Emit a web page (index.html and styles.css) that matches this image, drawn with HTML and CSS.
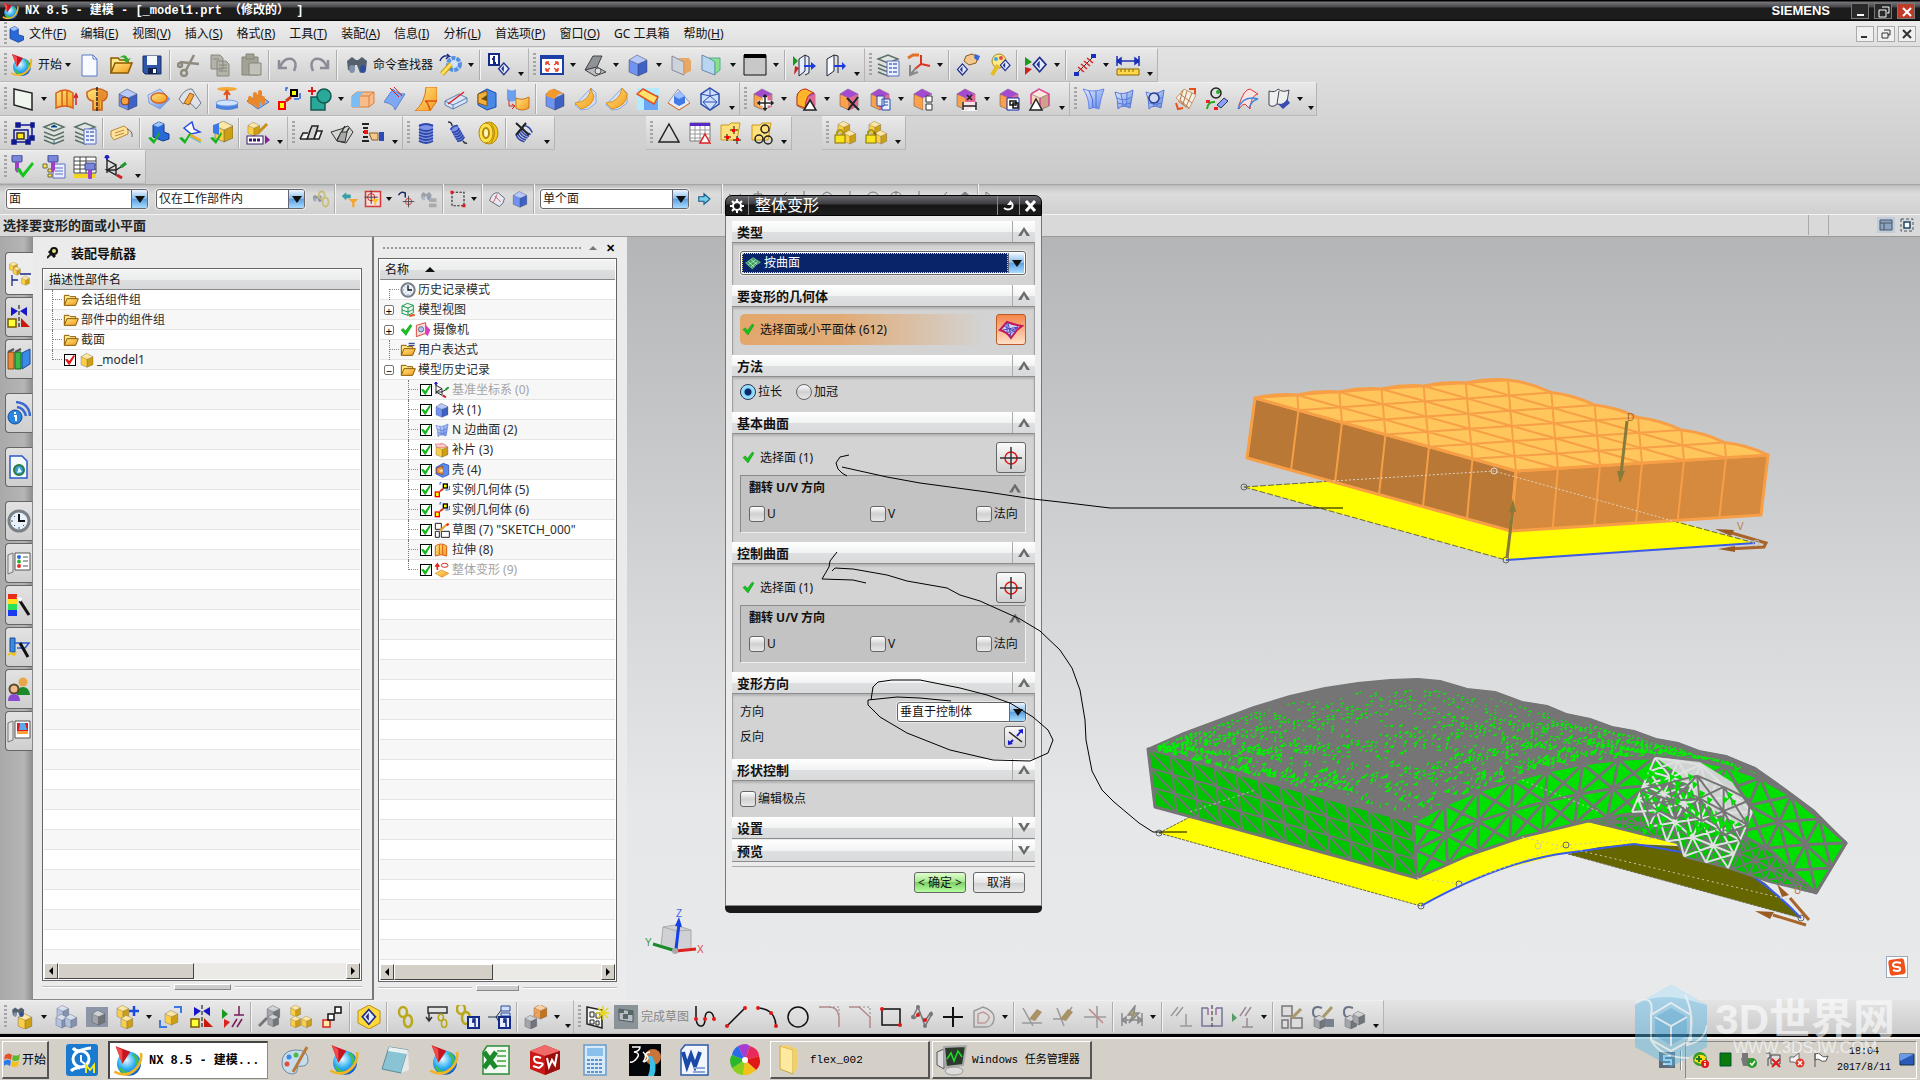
FILE: index.html
```html
<!DOCTYPE html>
<html lang="zh-CN">
<head>
    <meta charset="UTF-8">
    <meta name="viewport" content="width=device-width, initial-scale=1.0">
    <title>NX 8.5 - 建模</title>
    <link rel="stylesheet" href="styles.css">
</head>
<body>
    <!-- Shared icon parts -->
    <svg class="sprite" aria-hidden="true">
        <defs>
            <linearGradient id="gold" x1="0" y1="0" x2="1" y2="1"><stop offset="0" stop-color="#ffe680"/><stop offset="1" stop-color="#f39a1c"/></linearGradient>
            <linearGradient id="blueish" x1="0" y1="0" x2="1" y2="1"><stop offset="0" stop-color="#eaf2ff"/><stop offset="1" stop-color="#5b86e0"/></linearGradient>
            <radialGradient id="globe" cx=".4" cy=".35" r=".7"><stop offset="0" stop-color="#e8faff"/><stop offset=".5" stop-color="#36b4f4"/><stop offset="1" stop-color="#0a4fc8"/></radialGradient>
            <g id="cube"><path fill="currentColor" d="M3 7l9 4v12l-9-4z"/><path fill="currentColor" d="M12 11l9-4v12l-9 4z"/><path fill="#000" opacity=".18" d="M12 11l9-4v12l-9 4z"/><path fill="currentColor" d="M3 7l8-5 10 5-9 4z"/><path fill="#fff" opacity=".6" d="M3 7l8-5 10 5-9 4z"/><path fill="#fff" opacity=".2" d="M3 7l9 4v12l-9-4z"/><path fill="none" stroke="#334" stroke-opacity=".4" d="M3 7l8-5 10 5v12l-9 4-9-4zM3 7l9 4 9-4M12 11v12"/></g>
            <g id="nx"><circle cx="12" cy="14" r="9" fill="url(#globe)"/><path d="M5 17q3 5 8 4M15 7q4 3 3 8" fill="none" stroke="#3fc04a" stroke-width="2"/><path d="M1 20q9 5 16-2 5-5 4-12" fill="none" stroke="#f0b429" stroke-width="2"/><path d="M2 1l11 4-6 9z" fill="#c8141f"/><path d="M2 1l5 3v10z" fill="#f04a4a"/></g>
            <g id="folder"><path d="M2 20V5h7l2 2h8v4" fill="#ffe88a" stroke="#8a5a00" stroke-width="1.5"/><path d="M2 20l4-10h17l-4 10z" fill="url(#gold)" stroke="#8a5a00" stroke-width="1.5"/></g>
            <g id="check"><path d="M2 12l4-3 4 5 9-12 3 2-11 18z" fill="#16c41c" stroke="#0c8a12"/></g>
            <g id="sheet"><path d="M3 5q8 4 18-2-1 8-3 18-8-4-12 1Q6 12 3 5z" fill="url(#blueish)" stroke="#5a78d8"/><path d="M5 11q7 4 15-1M6 16q6 3 13 0M9 7q2 7 2 13M15 6q0 8-1 14" fill="none" stroke="#5a78d8"/></g>
            <g id="layers"><path d="M2 6l10-4 10 4-10 4zM2 11l10 4 10-4M2 15l10 4 10-4M2 19l10 4 10-4" fill="#dfe6e2" stroke="#5a6f66" stroke-width="1.4"/></g>
            <g id="binoc"><path d="M2 8l5-4 4 3 2 0 4-3 5 4-1 9-6 3-3-8h-2l-2 6-5-1z" fill="#55606e"/><ellipse cx="7" cy="16" rx="3" ry="4" fill="#7f92ab"/><ellipse cx="18" cy="16" rx="3" ry="4" fill="#2c4f9c"/></g>
            <g id="clock"><circle cx="12" cy="12" r="10" fill="#e9f1fb" stroke="#7b8087" stroke-width="3"/><path d="M12 5v7h6" fill="none" stroke="#111" stroke-width="2"/><path d="M12 18v2M4 12h2M7 7l1 1M7 17l1-1M17 17l-1-1" stroke="#456"/></g>
            <g id="diamond"><path d="M12 3l8 9-8 9-8-9z" fill="#e4eaff" stroke="#20308a" stroke-width="2"/><path d="M12 7v10l-4-5z" fill="#20308a"/></g>
            <g id="wrench"><circle cx="16" cy="11" r="6" fill="#cfe2fa" stroke="#5590e0" stroke-width="4" stroke-dasharray="4 1"/><path d="M4 21l9-10" stroke="#c99a10" stroke-width="5"/><path d="M4 21l9-10" stroke="#ffe05a" stroke-width="3"/></g>
            <g id="inst"><rect x="2" y="15" width="6" height="7" fill="#ff0" stroke="#f00" stroke-width="2"/><rect x="14" y="3" width="6" height="6" fill="#ff0" stroke="#000" stroke-width="2"/><path d="M9 14l5-4" stroke="#d2401a" stroke-width="3"/><path d="M11 1h-2v3M22 12h-5M23 6v6" fill="none" stroke="#2c66d8" stroke-width="1.5"/></g>
            <g id="pip"><path d="M3 3v15M3 5l9 5v10l-9-5 9 0 8-5M3 15l9-5" fill="none" stroke="#222" stroke-width="1.4"/><path d="M3 5V1M1 3l2-3 2 3" fill="none" stroke="#22b" stroke-width="2"/><path d="M17 12l5-4" stroke="#1a9a2a" stroke-width="3"/><path d="M13 20l5 3" stroke="#c22" stroke-width="3"/></g>
            <g id="mirror"><path d="M4 2v9l7-5zM20 2v9l-7-5z" fill="#1616c8"/><path d="M12 0v24" stroke="#000" stroke-dasharray="4 2"/><rect x="1" y="14" width="8" height="8" fill="#ff3" stroke="#7a5a00" stroke-width="1.5"/><path d="M14 13v9h9z" fill="#c8190c"/></g>
            <g id="extrude"><path d="M2 6q9-6 17 0v15q-8-4-17 0z" fill="url(#gold)" stroke="#d8601a" stroke-width="1.5"/><path d="M8 4v15M13 4v15" stroke="#d8601a" stroke-width="1.5"/></g>
            <g id="shell"><path d="M3 8l11-6 8 3v14l-9 4-10-5z" fill="#5a8cf0" stroke="#1c3c9c"/><path d="M4 9l9-3v13l-9-3z" fill="#f0913a" stroke="#8a3a10"/><path d="M7 13l6-3v6z" fill="#ffe3a0"/></g>
            <g id="target"><circle cx="12" cy="12" r="6" fill="none" stroke="#e01818" stroke-width="1.5"/><path d="M12 1v22M1 12h22" stroke="#333" stroke-width="1.5"/></g>
            <g id="bolt"><rect x="6" y="0" width="10" height="7" rx="1" fill="#7a86d8" stroke="#3a4694"/><path d="M9 7h4v8l-2 3-2-3z" fill="#a040c8"/></g>
            <g id="spring"><path d="M5 5q7-4 14 0M5 8q7 4 14 0M5 11q7 4 14 0M5 14q7 4 14 0M5 17q7 4 14 0M5 20q7 4 14 0" fill="none" stroke="#2f47a8" stroke-width="2"/></g>
            <g id="lock"><rect x="2" y="14" width="10" height="8" fill="#f4e51c" stroke="#8a6a00"/><path d="M4 14v-3q3-4 6 0v3" fill="none" stroke="#a89a10" stroke-width="2"/></g>
            <g id="link"><ellipse cx="9" cy="7" rx="4" ry="5" fill="none" stroke="#b9a91a" stroke-width="2.5"/><ellipse cx="14" cy="16" rx="4" ry="6" fill="none" stroke="#b9a91a" stroke-width="2.5"/></g>
            <g id="ibox"><rect x="12" y="12" width="11" height="11" fill="#e9efff" stroke="#142a8a" stroke-width="2"/><path d="M17 14h2v2h-2zM16 17h3v4h1" fill="none" stroke="#142a8a" stroke-width="1.5"/></g>
            <g id="doc"><path d="M4 2h11l4 4v17H4z" fill="#f8faff" stroke="#5a78c8"/><path d="M15 2v4h4" fill="none" stroke="#5a78c8"/></g>
            <g id="eraser"><path d="M8 14l8-10 5 3-7 9z" fill="#a89266"/></g>
            <g id="purpleTop"><path d="M3 7l8-5 10 5-9 4z" fill="#a24ad0"/><path d="M12 11l9-4v12l-9 4z" fill="#e86ac8" opacity=".7"/></g>
        </defs>
    </svg>

    <header class="titlebar">
        <svg viewBox="0 0 24 24"><use href="#nx"/></svg>
        <span class="title">NX 8.5 - 建模 - [_model1.prt （修改的） ]</span>
        <span class="brand">SIEMENS</span>
        <button class="win"><svg width="12" height="12"><path d="M2 9h7" stroke="#fff" stroke-width="2"/></svg></button>
        <button class="win"><svg width="12" height="12"><path d="M4 1h7v6H9M1 4h7v7H1z" fill="none" stroke="#fff"/></svg></button>
        <button class="win close"><svg width="12" height="12"><path d="M2 2l8 8m0-8l-8 8" stroke="#fff" stroke-width="2"/></svg></button>
    </header>

    <nav class="menubar">
        <span class="grip"></span>
        <svg width="18" height="18" viewBox="0 0 24 24"><path d="M4 5l6-3 5 3v8l7 2v5l-7 3-11-5z" fill="#2a6ad8" stroke="#123a8c"/><path d="M4 5l6-3 5 3-6 3z" fill="#9cc4ff"/></svg>
        <a href="#">文件(<u>F</u>)</a><a href="#">编辑(<u>E</u>)</a><a href="#">视图(<u>V</u>)</a><a href="#">插入(<u>S</u>)</a><a href="#">格式(<u>R</u>)</a><a href="#">工具(<u>T</u>)</a><a href="#">装配(<u>A</u>)</a><a href="#">信息(<u>I</u>)</a><a href="#">分析(<u>L</u>)</a><a href="#">首选项(<u>P</u>)</a><a href="#">窗口(<u>O</u>)</a><a href="#">GC 工具箱</a><a href="#">帮助(<u>H</u>)</a>
        <span class="spacer"></span>
        <button class="mdi"><svg width="12" height="12"><path d="M2 9h6" stroke="#333" stroke-width="2"/></svg></button>
        <button class="mdi"><svg width="12" height="12"><path d="M4 2h6v5H8M2 5h6v5H2z" fill="none" stroke="#333"/></svg></button>
        <button class="mdi"><svg width="12" height="12"><path d="M2 2l8 8m0-8l-8 8" stroke="#333" stroke-width="2"/></svg></button>
    </nav>

    <div class="toolbars">
        <!-- Standard / view -->
        <div class="row">
            <div class="bar">
                <span class="grip"></span>
                <button class="tool text"><svg><use href="#nx"/></svg>开始</button><i class="arr"></i>
                <button class="tool"><svg><use href="#doc"/></svg></button>
                <button class="tool"><svg><use href="#folder"/><path d="M10 5q6-6 9 1l3-1-4 5-5-4 3 0q-2-3-6-1z" fill="#3aa82a"/></svg></button>
                <button class="tool"><svg><path d="M3 3h18v18H5l-2-2z" fill="#2f55a8" stroke="#1a2c66"/><path d="M7 3h10v9H7z" fill="#f4f7fb"/><path d="M8 15h9v6H8z" fill="#0f1f4a"/><path d="M13 16h3v4h-3z" fill="#fff"/></svg></button>
                <i class="sep"></i>
                <button class="tool"><svg fill="none" stroke="#8e8a7e" stroke-width="2.5"><path d="M17 2L9 17M3 9l19 2"/><circle cx="7" cy="20" r="3"/><circle cx="3" cy="12" r="2"/></svg></button>
                <button class="tool"><svg fill="#b3b3ab" stroke="#88887f"><path d="M3 2h9l3 3v11H3zM9 8h9l3 3v12H9z"/><path d="M11 12h8M11 15h8M11 18h8M5 6h6"/></svg></button>
                <button class="tool"><svg fill="#a3a295" stroke="#85857a"><path d="M3 4h16v18H3z"/><path d="M7 1h8v5H7z"/><path d="M10 10h12v12H10z" fill="#c2c2ba"/></svg></button>
                <i class="sep"></i>
                <button class="tool"><svg fill="none" stroke="#8b8d96" stroke-width="2.5"><path d="M4 14q4-10 12-8 6 3 2 12"/><path d="M3 7v8h8"/></svg></button>
                <button class="tool"><svg fill="none" stroke="#8b8d96" stroke-width="2.5"><path d="M20 14Q16 4 8 6q-6 3-2 12"/><path d="M21 7v8h-8"/></svg></button>
                <i class="sep"></i>
                <button class="tool text find"><svg><use href="#binoc"/></svg>命令查找器</button>
                <button class="tool"><svg><use href="#wrench"/><path d="M2 8q2-6 9-5l-2-2m2 2l-3 3" fill="none" stroke="#1a2a8a" stroke-width="1.5"/></svg></button><i class="arr"></i>
                <i class="sep"></i>
                <button class="tool"><svg><rect x="2" y="1" width="10" height="11" fill="#fff" stroke="#142a8a" stroke-width="2"/><path d="M7 3v2M5 6h2v4h2" fill="none" stroke="#142a8a" stroke-width="2"/><use href="#diamond" transform="translate(9 8) scale(.65)"/></svg></button>
                <i class="more"></i>
            </div>
            <div class="bar">
                <span class="grip"></span>
                <button class="tool"><svg><rect x="1" y="3" width="22" height="18" fill="#fff" stroke="#1c3ea8" stroke-width="2"/><path d="M1 3h22v3H1z" fill="#1c3ea8"/><path d="M6 9l4 3m-4-3h3m-3 0v3M18 9l-4 3m4-3h-3m3 0v3M6 18l4-3m-4 3h3m-3 0v-3M18 18l-4-3m4 3h-3m3 0v-3" stroke="#e8442a" stroke-width="1.5"/></svg></button><i class="arr"></i>
                <button class="tool"><svg><path d="M2 17L10 3h9l-5 11z" fill="#8f9296" stroke="#444"/><path d="M2 17l12-3 9 5-11 4z" fill="#b9bcc0" stroke="#444"/><circle cx="15" cy="18" r="3" fill="#ddd" stroke="#555"/></svg></button><i class="arr"></i>
                <button class="tool"><svg class="c-blue"><use href="#cube"/></svg></button><i class="arr"></i>
                <button class="tool"><svg><path d="M3 3l12 6v13L3 17z" fill="#ccd3da" stroke="#889"/><path d="M9 5h11l2 3v10l-7 3V9z" fill="#e89a4a" opacity=".8"/></svg></button>
                <button class="tool"><svg><path d="M2 2l13 6v14L2 17z" fill="#b8d6f0" stroke="#68a"/><path d="M9 5h11v12l-5 4V9z" fill="#8be08b" stroke="#5a9"/></svg></button><i class="arr"></i>
                <button class="tool"><svg><path d="M1 2h22v20H1z" fill="#c8c8c8" stroke="#111"/><path d="M1 1h22v4H1z"/></svg></button><i class="arr"></i>
                <i class="sep"></i>
                <button class="tool"><svg><path d="M7 6l6-4v16l-6 5zM13 2l4 2v16l-4 2" fill="#e4eeff" stroke="#223"/><path d="M1 3v10l5-5z" fill="#1a9a1a"/><path d="M3 13l4 2-5 7z" fill="#c22"/><path d="M12 12h7V9l5 4-5 4v-3h-7z" fill="#1d3cdc"/></svg></button>
                <button class="tool"><svg><path d="M4 6l7-4v16l-7 5z" fill="#f6f9ff" stroke="#223"/><path d="M11 2l4 1v17" fill="none" stroke="#223"/><path d="M11 12h8V9l4 4-4 4v-3h-8z" fill="#1d3cdc"/></svg></button>
                <i class="more"></i>
            </div>
            <div class="bar">
                <span class="grip"></span>
                <button class="tool"><svg><use href="#layers"/><path d="M11 8h12v15H11z" fill="#eaf0ff" stroke="#5b6fc0"/><path d="M13 11h3M13 15h3M13 19h3M17 11h4M17 15h4M17 19h4" stroke="#5b6fc0" stroke-width="1.5"/></svg></button>
                <button class="tool"><svg fill="none" stroke-width="2"><path d="M1 5l5-3h6" stroke="#e0702a" stroke-width="3"/><path d="M14 2v9l9 2M14 11l-6 5" stroke="#e03020"/><path d="M3 12v10l8-3M3 22l6-7" stroke="#888"/></svg></button><i class="arr"></i>
                <i class="sep"></i>
                <button class="tool"><svg><path d="M10 3l6-2 6 3-2 6-7 2-5-4z" fill="#f3c98a" stroke="#8a5a2a"/><path d="M19 1l5 2-2 5-4-3z" fill="#3a6ad8"/><use href="#diamond" transform="translate(-1 9) scale(.62)"/></svg></button>
                <button class="tool"><svg><circle cx="12" cy="8" r="7" fill="#ffe88a" stroke="#a88a1a"/><circle cx="9" cy="6" r="2" fill="#3aa8e8"/><circle cx="14" cy="5" r="2" fill="#e84a3a"/><path d="M5 22l6-10" stroke="#e6be22" stroke-width="4"/><use href="#diamond" transform="translate(11 5) scale(.6)"/></svg></button>
                <i class="sep"></i>
                <button class="tool"><svg><path d="M1 4v9l7-4z" fill="#1a9a1a"/><path d="M1 14v8l7-6z" fill="#c22"/><use href="#diamond" transform="translate(6 2) scale(.8)"/></svg></button><i class="arr"></i>
                <i class="sep"></i>
                <button class="tool"><svg><path d="M3 21L21 3" stroke="#333"/><path d="M5 14l6 5M8 11l6 5M11 8l6 5M14 5l6 5" stroke="#d22" stroke-width="1.5"/><path d="M1 19h5v4H1zM18 1h5v4h-5z" fill="#1c2fb8"/></svg></button><i class="arr"></i>
                <button class="tool"><svg><path d="M1 8h22M1 3v10M23 3v10M1 8l4-3v6zM23 8l-4-3v6z" stroke="#1c2fb8" stroke-width="1.5" fill="#1c2fb8"/><path d="M1 16h22v6H1z" fill="#ffd84a" stroke="#8a6a00"/><path d="M5 16v3M9 16v3M13 16v3M17 16v3" stroke="#8a6a00"/></svg></button>
                <i class="more"></i>
            </div>
        </div>

        <!-- Feature / synchronous modeling / surface -->
        <div class="row">
            <div class="bar">
                <span class="grip"></span>
                <button class="tool"><svg><path d="M3 2l18 4v17L3 18z" fill="#f0f6ee" stroke="#222" stroke-width="1.5"/></svg></button><i class="arr"></i>
                <button class="tool"><svg><use href="#extrude"/><path d="M22 18V8m-2 3l2-4 2 4" fill="none" stroke="#d22" stroke-width="1.5"/></svg></button>
                <button class="tool"><svg><path d="M2 5q10-7 20 0 1 8-5 9v9H8v-9Q1 13 2 5z" fill="url(#gold)" stroke="#c8601a" stroke-width="1.5"/><path d="M13 2l8 3-1 7-5 2v8h-2z" fill="#d8701a" opacity=".6"/><path d="M12 0v24" stroke="#222" stroke-width="1.5" stroke-dasharray="4 1"/></svg></button>
                <button class="tool"><svg class="c-blue"><use href="#cube"/><circle cx="9" cy="14" r="4" fill="#f5a03a" stroke="#8a3a1a"/></svg></button>
                <button class="tool"><svg><path d="M1 8l12-6 10 10-10 10L2 16z" fill="url(#blueish)" stroke="#7aa0e0"/><ellipse cx="12" cy="11" rx="8" ry="5" fill="url(#gold)" stroke="#e0601a" stroke-width="1.5"/></svg></button>
                <button class="tool"><svg><path d="M1 12Q7 1 14 2l9 14-5 6q-7-10-13-5z" fill="#dfe3e8" stroke="#6a7a90"/><path d="M6 16l6-10 4 2-5 10z" fill="#f5a83a" stroke="#a85a10"/></svg></button>
                <i class="sep"></i>
                <button class="tool"><svg><ellipse cx="12" cy="2" rx="10" ry="2" fill="#f5a83a"/><path d="M12 14V5m-3 3l3-4 3 4" stroke="#e0501a" stroke-width="2" fill="none"/><path d="M1 16h22v5q-11 4-22 0z" fill="#4a80de"/><ellipse cx="12" cy="16" rx="11" ry="3" fill="#cfe2ff" stroke="#7aa0e0"/></svg></button>
                <button class="tool"><svg><path d="M1 14l12-6 10 7-11 7z" fill="#8eb4f0" stroke="#4a74c0"/><path d="M4 15v-4M8 17v-5M12 19v-6M9 12V7M13 14V9M17 16v-5M14 10V5" stroke="#e8882a" stroke-width="4" stroke-linecap="round"/></svg></button>
                <button class="tool"><svg><use href="#inst"/></svg></button>
                <button class="tool"><svg><path d="M3 10h14v13H3z" fill="#2aa89a" stroke="#145a50" stroke-width="1.5"/><circle cx="16" cy="9" r="7" fill="#2aa89a" stroke="#145a50" stroke-width="1.5"/><path d="M0 4h8M4 0v8" stroke="#e01818" stroke-width="2"/></svg></button><i class="arr"></i>
                <button class="tool"><svg><path d="M1 9l5-4h17v11l-5 4H1z" fill="#f8bc8a" stroke="#d8803a"/><path d="M6 9h12v11M18 9l5-4" fill="none" stroke="#d8803a"/><path d="M1 9l5-4h7l-4 4v11H1z" fill="#7abcf4"/></svg></button>
                <button class="tool"><svg><path d="M2 15L11 2q4 5 12 5L13 23q-1-6-11-8z" fill="#7fa8f4" stroke="#5c84d0"/><path d="M8 1l9 9M12 0l8 9" stroke="#e01818"/></svg></button>
                <button class="tool"><svg><path d="M13 0h11v14l-7 10H2q10-8 11-24z" fill="url(#gold)" stroke="#e0701a"/><path d="M12 14q3 1 5 9M12 14l12 0" stroke="#e0501a" stroke-width="1.5" fill="none"/></svg></button>
                <button class="tool"><svg><path d="M1 14l14-7 8 4v4L9 22l-8-4z" fill="#d9e6fa" stroke="#5a7ab0"/><path d="M1 14l8 4 14-7M9 18v4" stroke="#5a7ab0" fill="none"/><path d="M4 17L20 5" stroke="#d22" stroke-width="1.5"/></svg></button>
                <button class="tool"><svg><path d="M3 7l9-5 9 4v14l-9 3-9-5z" fill="#4a88e8" stroke="#1c4cac"/><path d="M3 7l9-3v15l-9-3z" fill="#f0b03a" stroke="#8a5a10"/><path d="M6 12l6-4v6z" fill="#6a4a10"/></svg></button>
                <button class="tool"><svg><path d="M1 2q5 3 9 0v11q-4 3-9 0z" fill="#6aa0ee"/><path d="M10 11q6 3 13-1v11q-7 4-13 0z" fill="url(#gold)" stroke="#c8701a"/><path d="M3 13v6h5m-2-2l3 2-3 3" stroke="#d22" fill="none"/></svg></button>
                <i class="sep"></i>
                <button class="tool"><svg class="c-blue"><use href="#cube"/><path d="M3 9q1-7 8-7l10 5q-7-1-9 5z" fill="#f59a2a"/></svg></button>
                <button class="tool"><svg><path d="M17 1l5 5v10l-8 6-7 1-6-5z" fill="#d4e2f8" stroke="#8aa8e0"/><path d="M1 16q14-1 16-15 1 5 3 8-1 10-13 13z" fill="url(#gold)" stroke="#e0901a"/></svg></button>
                <button class="tool"><svg><path d="M17 1l5 5v10l-8 6-7 1-6-5z" fill="#d4e2f8" stroke="#8aa8e0"/><path d="M1 16q14-1 16-15l5 6q0 12-15 15z" fill="url(#gold)" stroke="#e0901a"/></svg></button>
                <button class="tool"><svg><path d="M1 1h22v22H1z" fill="#b4eaff"/><path d="M8 8h14v15H8z" fill="#6aa4f4"/><path d="M1 7l6-5 15 8-4 7z" fill="#ffe06a" stroke="#e0501a" stroke-width="1.5"/></svg></button>
                <button class="tool"><svg><path d="M1 16L11 2l12 14-11 7z" fill="#e8ecf4" stroke="#99a"/><path d="M7 9l5-5 6 5v7l-6 3-5-3z" fill="#3f7ae8"/><path d="M7 9l5-5 6 5-6 3z" fill="#9cc0ff"/><path d="M1 16l11 7 11-7" stroke="#e0701a" fill="none"/></svg></button>
                <button class="tool"><svg><path d="M12 1l9 6v10l-9 6-9-6V7z" fill="#cfe0ff" stroke="#2c4fae" stroke-width="1.5"/><path d="M12 1v8l-7 6m7-6l7 6m-7 8l-7-8h14zM3 7l9 2 9-2" fill="none" stroke="#2c4fae"/></svg></button>
                <i class="more"></i>
            </div>
            <div class="bar">
                <span class="grip"></span>
                <button class="tool"><svg class="c-mix"><use href="#cube"/><use href="#purpleTop"/><path d="M14 9v14M7 16h15" stroke="#fff" stroke-width="5"/><path d="M14 8v15M7 16h15M12 10l2-2 2 2M12 21l2 2 2-2M9 14l-2 2 2 2M20 14l2 2-2 2" stroke="#222" stroke-width="1.5" fill="none"/></svg></button><i class="arr"></i>
                <button class="tool"><svg class="c-mix"><use href="#cube"/><use href="#purpleTop"/><path d="M3 10q1-8 9-8l8 4q-8 0-9 15l-8-3z" fill="#ffb52a" stroke="#c8301a"/><path d="M16 13l6 10H10z" fill="#fff" stroke="#222" stroke-width="1.5"/></svg></button><i class="arr"></i>
                <button class="tool"><svg class="c-mix"><use href="#cube"/><use href="#purpleTop"/><path d="M10 11l12 12M21 10L11 23" stroke="#222" stroke-width="2"/></svg></button>
                <button class="tool"><svg class="c-mix"><use href="#cube"/><use href="#purpleTop"/><path d="M9 9h7v10H9zM14 12h8v11h-8z" fill="#e8f0ff" stroke="#2a4aa8"/><path d="M16 15h4M16 18h4" stroke="#2a4aa8"/></svg></button><i class="arr"></i>
                <button class="tool"><svg class="c-mix"><use href="#cube"/><use href="#purpleTop"/><path d="M12 11l10-4v16H12z" fill="#ddd"/><path d="M15 9h6v6h-6zM15 17h6v6h-6z" fill="#fff" stroke="#333"/></svg></button><i class="arr"></i>
                <button class="tool"><svg class="c-mix"><use href="#cube"/><use href="#purpleTop"/><path d="M8 15h15v9H8z" fill="#fff" opacity=".8"/><path d="M9 15v8M22 15v8M9 19h13M13 8l5 5m0-5l-5 5" stroke="#222" stroke-width="1.5"/></svg></button><i class="arr"></i>
                <button class="tool"><svg class="c-mix"><use href="#cube"/><use href="#purpleTop"/><path d="M10 11h12v12H10z" fill="#fff" stroke="#12a"/><path d="M13 14h6v4h-6zM16 16h5v5h-5z" fill="none" stroke="#111" stroke-width="1.5"/></svg></button>
                <button class="tool"><svg class="c-pale"><use href="#cube"/><path d="M3 7l8-5 10 5v12M12 11v10M3 7v10" fill="none" stroke="#e04a9a" stroke-width="1.5"/><path d="M8 12l6 11H2z" fill="#fff" stroke="#222" stroke-width="1.5"/></svg></button>
                <i class="more"></i>
            </div>
            <div class="bar">
                <span class="grip"></span>
                <button class="tool"><svg><path d="M2 2q10 4 21 0-3 8-5 20-6-3-10 0Q8 10 2 2z" fill="url(#blueish)" stroke="#6a86f0"/><path d="M8 4q5 8 4 17M15 4q0 8 0 17" fill="none" stroke="#4a66e0"/></svg></button>
                <button class="tool"><svg><use href="#sheet"/></svg></button>
                <button class="tool"><svg><use href="#sheet"/><circle cx="11" cy="11" r="5" fill="#cfd8f0" stroke="#223a8a" stroke-width="1.5"/></svg></button>
                <button class="tool"><svg><path d="M2 11l8-9 12 6-7 14z" fill="#f6efe4" stroke="#c89a6a"/><path d="M6 7l12 9M4 14l8 6M9 3l-3 10 9 8M13 4L9 17M18 6l-6 14" stroke="#b87a4a" fill="none"/><path d="M15 2h6v5M2 16l2 6 5-1" stroke="#e8501a" stroke-width="2" fill="none"/></svg></button>
                <button class="tool"><svg><circle cx="11" cy="6" r="5" fill="none" stroke="#222" stroke-width="1.5"/><circle cx="13" cy="5" r="2" fill="#2a2"/><path d="M2 22q1-8 8-7" stroke="#2a2" stroke-width="2" fill="none"/><path d="M12 18l7-7 4 3-7 7z" fill="#8aa0ff" stroke="#334"/><path d="M1 13h4v3H1zM9 20h4v3H9z" fill="#e22"/></svg></button>
                <button class="tool"><svg fill="none"><path d="M3 18Q8 2 14 2l8 5q-7 1-8 15l-5-5q-3 0-6 5z" fill="#fde2e2" stroke="#e03a3a"/><path d="M2 22q5-14 20-10-6 1-9 9" stroke="#3a8ae0" stroke-width="1.5"/></svg></button>
                <button class="tool"><svg><path d="M2 4q6 2 9-2 5 4 11 1l-2 12q-5 4-10 2-4 4-8 1z" fill="#eef0f0" stroke="#445"/><path d="M12 4l-2 13" stroke="#445"/><path d="M11 17q6 1 9-5l3 4-7 6z" fill="#3a4ab0"/></svg></button><i class="arr"></i>
                <i class="more"></i>
            </div>
        </div>

        <!-- GC toolkit and small bars -->
        <div class="row">
            <div class="bar">
                <span class="grip"></span>
                <button class="tool"><svg fill="none" stroke="#101a90" stroke-width="1.5"><path d="M7 4h14v13h-3M3 9h14v12H3z"/><path d="M5 2h4v4H5zM20 2h3v4h-3zM1 19h4v4H1zM15 19h4v4h-4zM19 15h4v4h-4z" fill="#101a90"/><rect x="6" y="12" width="7" height="6" fill="#ffe81a" stroke="#333"/></svg></button>
                <button class="tool"><svg><use href="#layers"/><path d="M12 4l3 2h-6zM12 20v3" stroke="#16a"/></svg></button>
                <button class="tool"><svg><use href="#layers"/><path d="M11 8h12v15H11z" fill="#eaf0ff" stroke="#5b6fc0"/><path d="M13 11h3M13 15h3M13 19h3M17 11h4M17 15h4M17 19h4" stroke="#5b6fc0" stroke-width="1.5"/></svg></button>
                <i class="sep"></i>
                <button class="tool"><svg><path d="M1 10l13-5 4 3v5L4 19l-3-4z" fill="#ffe29a" stroke="#b88a3a"/><path d="M5 12l9-3M5 15l9-3" stroke="#b88a3a"/><path d="M17 8q6 2 5 8" fill="none" stroke="#665"/></svg></button>
                <i class="sep"></i>
                <button class="tool"><svg><path d="M6 4l6-3 5 2v8l5 2v5l-6 2-10-4z" fill="#2a6ad8" stroke="#123a8c"/><path d="M6 4l6-3 5 2-6 3z" fill="#9cc4ff"/><path d="M1 17l3-1 3 3 5-8 1 2-6 10z" fill="#16b41c"/></svg></button>
                <button class="tool"><svg><path d="M6 7l8-6 2 7 6 3-9 2z" fill="#fff" stroke="#2a4ae0" stroke-width="1.5"/><path d="M12 14l11 6" stroke="#e8b02a" stroke-width="3"/><path d="M12 16l11 6" stroke="#4ac0e8"/><path d="M1 17l3-1 3 3 5-8 1 2-6 10z" fill="#16b41c"/></svg></button>
                <button class="tool"><svg class="c-gold"><use href="#cube" x="3" y="-2"/><path d="M4 4l6-2v12l-6-2z" fill="#3a7ae8"/><path d="M1 17l3-1 3 3 5-8 1 2-6 10z" fill="#16b41c"/></svg></button>
                <i class="sep"></i>
                <button class="tool"><svg class="c-gold"><use href="#cube" transform="scale(.65)"/><path d="M12 12l9-9" stroke="#c8901a" stroke-width="3"/><rect x="1" y="15" width="16" height="8" fill="#fff" stroke="#3a1a6a"/><path d="M3 19h12" stroke="#3a1a6a" stroke-width="3" stroke-dasharray="3 1"/><path d="M19 14v9l5-4z" fill="#8a1a9a"/></svg></button>
                <i class="more"></i>
            </div>
            <div class="bar">
                <span class="grip"></span>
                <button class="tool"><svg stroke="#222" stroke-width="1.5"><path d="M10 12l3-7h6l-4 13H8z" fill="#d4d4d4"/><path d="M1 18h7l3-8M15 18l3-8h5l-3 8h-5" fill="#f8f8f8"/><path d="M1 18l3-6h5" fill="none"/></svg></button>
                <button class="tool"><svg stroke="#333"><path d="M1 11l6 9 9 2 7-11-5-6-7 3z" fill="#d4d6d4"/><path d="M7 19l8-14M11 21l8-14" fill="none" stroke-width="1.5"/><path d="M7 20l4-9 6 0-2 10z" fill="#a8aaa8"/></svg></button>
                <button class="tool"><svg><path d="M1 3h7M1 20h7M2 7h5M2 11h4M2 16h5" stroke="#222" stroke-width="2"/><path d="M3 9h4v4H3z" fill="#e01818"/><path d="M8 12h9v7h-6z" fill="#f3c98a" stroke="#8a5a2a"/><path d="M18 11h5v9h-5z" fill="#2a4ab8"/></svg></button>
                <i class="more"></i>
            </div>
            <div class="bar">
                <span class="grip"></span>
                <button class="tool"><svg><rect x="5" y="3" width="14" height="18" fill="#7f93e8"/><use href="#spring"/></svg></button>
                <button class="tool"><svg><g transform="rotate(-30 12 12) translate(5 2) scale(.6 .85)"><rect x="5" y="3" width="14" height="18" fill="#7f93e8"/><use href="#spring"/></g><path d="M3 1q4 0 4 4M18 20q2 3 4 2" stroke="#334" fill="none" stroke-width="1.5"/></svg></button>
                <button class="tool"><svg fill="none"><ellipse cx="13" cy="12" rx="9" ry="11" fill="#f0c81a" stroke="#b8860b"/><ellipse cx="10" cy="12" rx="7" ry="10" fill="#ffe24a" stroke="#b8860b"/><ellipse cx="10" cy="12" rx="3" ry="5" fill="#fff6c0" stroke="#b8860b" stroke-width="2"/><path d="M15 2q7 10 0 20" stroke="#b8860b"/></svg></button>
                <i class="sep"></i>
                <button class="tool"><svg><g transform="rotate(40 12 12) translate(2 3) scale(.8)"><use href="#spring"/></g><path d="M3 2l13 12M13 2L3 14" stroke="#222" stroke-width="2"/></svg></button>
                <i class="more"></i>
            </div>
            <div class="bar gap-large">
                <span class="grip"></span>
                <button class="tool"><svg><path d="M12 3l10 18H2z" fill="none" stroke="#222" stroke-width="1.5"/></svg></button>
                <button class="tool"><svg><path d="M2 2h20v18H2z" fill="#fff" stroke="#777"/><path d="M2 2h20v3H2z" fill="#5a2ac8"/><path d="M2 9h20M2 13h20M2 17h20M7 5v15M12 5v15M17 5v15" stroke="#999"/><path d="M17 13l5 9H12z" fill="#fff" stroke="#d22" stroke-width="1.5"/></svg></button>
                <button class="tool"><svg><path d="M2 4h8l2-2h9l-3 17H2z" fill="#ffe07a" stroke="#c89a1a"/><path d="M15 5v8M11 9h8M8 13v7M5 16h7M18 15v8M14 19h8" stroke="#111"/><path d="M13 8h3v3h-3zM7 15h3v3H7zM17 17h3v3h-3z" fill="#f00"/></svg></button>
                <button class="tool"><svg><path d="M2 4h8l2-2h9l-3 17H2z" fill="#ffe07a" stroke="#c89a1a"/><g fill="none" stroke="#222" stroke-width="1.5"><circle cx="15" cy="8" r="4"/><circle cx="9" cy="18" r="4"/><circle cx="18" cy="19" r="4"/></g></svg></button>
                <i class="more"></i>
            </div>
            <div class="bar gap-small">
                <span class="grip"></span>
                <button class="tool"><svg class="c-gold"><use href="#cube" transform="translate(3 -1) scale(.65)"/><use href="#cube" transform="translate(9 8) scale(.65)"/><use href="#lock"/></svg></button>
                <button class="tool"><svg class="c-gold"><use href="#cube" transform="translate(3 -1) scale(.65)"/><use href="#cube" transform="translate(9 8) scale(.65)"/><use href="#lock"/><path d="M10 11l2 3" stroke="#8a6a00" stroke-width="2"/></svg></button>
                <i class="more"></i>
            </div>
        </div>

        <div class="row">
            <div class="bar">
                <span class="grip"></span>
                <button class="tool"><svg><use href="#bolt" x="-5"/><path d="M5 14l4-1 3 5L21 7l2 2-11 14z" fill="#16c41c"/></svg></button>
                <button class="tool"><svg><path d="M11 9h12v14H11z" fill="#eaf0ff" stroke="#5b6fc0"/><path d="M13 13h8M13 16h8M13 19h8" stroke="#5b6fc0"/><path d="M1 9h4v4H1zM6 14h4v3H6zM6 19h4v3H6z" fill="#ffe83a" stroke="#665"/><use href="#bolt"/></svg></button>
                <button class="tool"><svg><path d="M1 2h22v16H1z" fill="#fff" stroke="#444"/><path d="M1 19h22v4H1z" fill="#f4d51c"/><path d="M1 6h22M1 10h22M1 14h22M7 2v16M13 2v16" stroke="#444"/><use href="#bolt" x="6" y="8"/></svg></button>
                <button class="tool"><svg><use href="#pip"/></svg></button>
                <i class="more"></i>
            </div>
        </div>
    </div>

    <!-- Selection bar -->
    <div class="selection">
        <div class="combo w-type"><select aria-label="类型过滤器"><option>面</option></select><i class="drop"></i></div>
        <div class="combo w-scope"><select aria-label="选择范围"><option>仅在工作部件内</option></select><i class="drop"></i></div>
        <button class="mini"><svg viewBox="0 0 24 24" opacity=".5"><use href="#binoc" transform="translate(0 4) scale(.6)"/><g transform="translate(4 0)"><use href="#link"/></g></svg></button>
        <i class="sep"></i>
        <button class="mini"><svg viewBox="0 0 24 24"><path d="M1 8l6-5v3h6v5H7v3z" fill="#3aa0a8"/><path d="M10 12h13l-5 5v6h-3v-6z" fill="#f5a52a"/></svg></button>
        <button class="mini"><svg viewBox="0 0 24 24"><path d="M2 2h20v20H2z" fill="#f6dcdc" stroke="#d23a3a" stroke-width="2"/><use href="#target" transform="scale(.8)"/><path d="M10 12h10l-4 5v4h-2v-4z" fill="#f5c52a"/></svg></button><i class="arr"></i>
        <button class="mini"><svg viewBox="0 0 24 24"><path d="M2 7q3-6 9-3v6" fill="none" stroke="#1a2a6a" stroke-width="2"/><use href="#target" transform="translate(7 7) scale(.7)"/></svg></button>
        <button class="mini"><svg viewBox="0 0 24 24" opacity=".45"><use href="#binoc" transform="scale(.7)"/><path d="M12 11h10v5H12zM12 18h10v5H12z" fill="#777"/></svg></button>
        <i class="sep"></i>
        <button class="mini"><svg viewBox="0 0 24 24"><path d="M4 3h16v18H4z" fill="none" stroke="#222" stroke-width="1.5" stroke-dasharray="3 2"/><path d="M2 1h4v4H2zM18 19h4v4h-4z" fill="#e01818"/></svg></button><i class="arr"></i>
        <i class="sep"></i>
        <button class="mini"><svg viewBox="0 0 24 24"><path d="M2 14Q6 2 14 4l8 7q-1 8-7 11z" fill="#e6e9f4" stroke="#445"/><path d="M9 8l8 8M12 6L7 17" stroke="#d23a3a"/></svg></button>
        <button class="mini"><svg viewBox="0 0 24 24" class="c-blue"><use href="#cube"/></svg></button>
        <i class="sep"></i>
        <div class="combo w-rule"><select aria-label="面规则"><option>单个面</option></select><i class="drop"></i></div>
        <button class="mini next"><svg viewBox="0 0 24 24"><path d="M5 9h7V5l8 7-8 7v-4H5z" fill="#7ad0e8" stroke="#1a5a88" stroke-width="1.5"/></svg></button>
        <i class="sep"></i>
        <div class="snaps">
            <svg><path d="M2 3l6 5 6-5M2 12h12"/></svg><svg><path d="M8 0v14M1 8h14M4 3h8v8H4z"/></svg><svg><path d="M1 14L14 1"/></svg><svg><path d="M8 0v14M1 8h14"/></svg><svg><path d="M1 8q7-14 14 0"/></svg><svg><path d="M8 0v14"/></svg><svg><circle cx="8" cy="7" r="6"/></svg><svg><circle cx="8" cy="7" r="6"/><path d="M8 0v8"/></svg><svg><path d="M8 0v14M1 8h14"/></svg><svg><path d="M2 14L13 1"/></svg><svg><path d="M1 7l7-6 7 6-7 6z" fill="#889"/></svg>
        </div>
        <i class="sep"></i>
        <div class="snaps"><svg><path d="M3 1v13l4-4 6-1z"/></svg></div>
    </div>

    <div class="prompt">
        <strong>选择要变形的面或小平面</strong>
        <span class="spacer"></span>
        <i class="cell"></i><i class="cell wide"></i>
        <button class="mdi on"><svg width="14" height="14"><path d="M1 2h12v10H1z" fill="#8ea4c0" stroke="#456"/><path d="M1 5h12M5 5v7" stroke="#456"/></svg></button>
        <button class="mdi"><svg width="14" height="14"><path d="M1 1h12v12H1z" fill="none" stroke="#456" stroke-dasharray="3 2"/><path d="M4 4h6v6H4z" fill="#fff" stroke="#246" stroke-width="1.5"/></svg></button>
    </div>

    <main class="workspace">
        <!-- Resource bar -->
        <aside class="resource">
            <button class="tab active"><svg viewBox="0 0 24 24" class="c-gold"><use href="#cube" transform="translate(0 -1) scale(.45)"/><use href="#cube" transform="translate(4 4) scale(.4)"/><use href="#cube" transform="translate(12 13) scale(.45)"/><path d="M4 13v11M4 18h6M12 12h11" stroke="#1a2a8a" stroke-width="1.3"/></svg></button>
            <button class="tab"><svg viewBox="0 0 24 24"><use href="#mirror"/></svg></button>
            <button class="tab"><svg viewBox="0 0 24 24"><path d="M1 5h6v17H1z" fill="#e88a3a" stroke="#8a4a10"/><path d="M8 5h6v17H8z" fill="#3aba4a" stroke="#0a6a1a"/><path d="M15 6l8-4v15l-8 5z" fill="#3a8ae8" stroke="#1a4a9a"/><path d="M1 5l6-3M8 5l6-3" stroke="#555" stroke-width="2"/></svg></button>
            <button class="tab spaced"><svg viewBox="0 0 24 24"><circle cx="8" cy="16" r="7" fill="#2a86e0" stroke="#124a9a"/><path d="M8 11v2M7 15h2v5" stroke="#fff" stroke-width="2" fill="none"/><path d="M9 1q13 1 14 14M10 6q7 1 9 9" fill="none" stroke="#3a6ad0" stroke-width="2.5"/></svg></button>
            <button class="tab spaced"><svg viewBox="0 0 24 24"><path d="M3 1h12l5 5v17H3z" fill="#f4f8ff" stroke="#2a5ac8" stroke-width="1.5"/><circle cx="12" cy="15" r="5" fill="#3a9ad0" stroke="#2a7a3a" stroke-width="2"/><path d="M10 18l2-6 3 5z" fill="#dff"/></svg></button>
            <button class="tab spaced"><svg viewBox="0 0 24 24"><use href="#clock"/></svg></button>
            <button class="tab"><svg viewBox="0 0 24 24"><path d="M1 4l5-2v19l-5 2z" fill="#e4e4e4" stroke="#777"/><path d="M8 2h15v17H8z" fill="#fff" stroke="#555"/><circle cx="12" cy="6" r="2" fill="#2a6ae8"/><circle cx="12" cy="10.500" r="2" fill="#2ab82a"/><circle cx="12" cy="15" r="2" fill="#e82a2a"/><path d="M16 6h5M16 10h5M16 15h5" stroke="#555"/></svg></button>
            <button class="tab"><svg viewBox="0 0 24 24"><path d="M1 1h9v5H1z" fill="#e82a1a"/><path d="M1 6h9v5H1z" fill="#ffe01a"/><path d="M1 11h9v6H1z" fill="#2ae05a"/><path d="M1 17h9v6H1z" fill="#1a3af0"/><path d="M13 8l9 14" stroke="#111" stroke-width="3"/><path d="M9 4l6 1-1 4z" fill="#fff"/></svg></button>
            <button class="tab"><svg viewBox="0 0 24 24"><path d="M3 3h5v14H3z" fill="#3a8ae0" stroke="#1a4a9a"/><path d="M8 8h14l-4 5h-8" fill="none" stroke="#2a5ac8" stroke-width="1.500"/><path d="M13 8l8 14" stroke="#111" stroke-width="3"/><path d="M1 20l3-2 3 2 2-3" stroke="#f0c01a" stroke-width="2" fill="none"/></svg></button>
            <button class="tab"><svg viewBox="0 0 24 24"><circle cx="16" cy="5" r="4.500" fill="#e8a84a"/><path d="M10 18q0-8 6-8t7 8z" fill="#1a8a2a"/><circle cx="7" cy="12" r="4.500" fill="#f3b98a" stroke="#5a4a2a" stroke-width="2"/><path d="M1 24q0-7 6-7t6 7z" fill="#8a4ad0"/></svg></button>
            <button class="tab"><svg viewBox="0 0 24 24"><path d="M1 4l5-2v19l-5 2z" fill="#e4e4e4" stroke="#777"/><path d="M8 2h15v17H8z" fill="#fff" stroke="#555"/><path d="M10 4h11v10H10z" fill="#e01818"/><path d="M13 4h5l2 7h-8z" fill="#5aa8f0"/><path d="M10 12h11v3H10z" fill="#f5a03a"/></svg></button>
        </aside>

        <section class="panel assembly">
            <header class="panel-head">
                <svg width="12" height="12"><path d="M0 11l4-4" stroke="#222" stroke-width="2"/><path d="M2 4l6 6" stroke="#111" stroke-width="3"/><circle cx="7" cy="4" r="3" fill="#e8e48a" stroke="#111" stroke-width="2"/></svg>
                <h2>装配导航器</h2>
            </header>
            <div class="listbox">
                <div class="list-head">描述性部件名</div>
                <ul class="tree">
                    <li><i class="branch"></i><svg viewBox="0 0 24 24"><use href="#folder"/></svg>会话组件组</li>
                    <li><i class="branch"></i><svg viewBox="0 0 24 24"><use href="#folder"/></svg>部件中的组件组</li>
                    <li><i class="branch"></i><svg viewBox="0 0 24 24"><use href="#folder"/></svg>截面</li>
                    <li><i class="branch last"></i><label><input type="checkbox" class="tick red" checked><svg viewBox="0 0 24 24" class="c-gold"><use href="#cube"/></svg>_model1</label></li>
                </ul>
                <div class="scrollbar"><button class="sb left"></button><i class="thumb long"></i><span class="spacer"></span><button class="sb right"></button></div>
            </div>
            <div class="splitter"><hr><i></i><hr></div>
        </section>

        <section class="panel part">
            <header class="part-head"><i class="dots"></i><i class="up"></i><button class="x">✕</button></header>
            <div class="listbox">
                <div class="list-head">名称<i class="sort"></i></div>
                <ul class="tree">
                    <li><i class="branch first"></i><svg viewBox="0 0 24 24"><use href="#clock"/></svg>历史记录模式</li>
                    <li><button class="exp">+</button><svg viewBox="0 0 24 24"><path d="M3 6l8-4 9 3v11l-8 4-9-3zM3 6l9 3 8-4M12 9v11M3 12l9 3 8-4" fill="none" stroke="#1a9a4a" stroke-width="1.500"/><path d="M14 21l8-2" stroke="#f0501a" stroke-width="3"/></svg>模型视图</li>
                    <li><button class="exp">+</button><svg class="small-check" viewBox="0 0 24 24"><use href="#check"/></svg><svg viewBox="0 0 24 24"><path d="M16 4l7 8-4 9-4-3z" fill="#d83ad0"/><path d="M2 5l14-4v16L2 22z" fill="#f4dede" stroke="#e04a3a" stroke-width="1.500"/><circle cx="9" cy="11" r="4" fill="#a8c4f0" stroke="#446"/></svg>摄像机</li>
                    <li><i class="branch"></i><svg viewBox="0 0 24 24"><use href="#folder"/><path d="M13 2h9M13 5h9" stroke="#1a2a8a" stroke-width="1.500"/></svg>用户表达式</li>
                    <li><button class="exp">−</button><svg viewBox="0 0 24 24"><use href="#folder"/></svg>模型历史记录</li>
                    <li class="child off"><i class="branch"></i><label><input type="checkbox" class="tick" checked><svg viewBox="0 0 24 24"><use href="#pip"/></svg>基准坐标系 (0)</label></li>
                    <li class="child"><i class="branch"></i><label><input type="checkbox" class="tick" checked><svg viewBox="0 0 24 24" class="c-blue"><use href="#cube"/></svg>块 (1)</label></li>
                    <li class="child"><i class="branch"></i><label><input type="checkbox" class="tick" checked><svg viewBox="0 0 24 24"><use href="#sheet"/></svg>N 边曲面 (2)</label></li>
                    <li class="child"><i class="branch"></i><label><input type="checkbox" class="tick" checked><svg viewBox="0 0 24 24" class="c-gold"><use href="#cube"/><path d="M2 3h14l3 5H4z" fill="#fbd0d0" stroke="#e06a6a"/></svg>补片 (3)</label></li>
                    <li class="child"><i class="branch"></i><label><input type="checkbox" class="tick" checked><svg viewBox="0 0 24 24"><use href="#shell"/></svg>壳 (4)</label></li>
                    <li class="child"><i class="branch"></i><label><input type="checkbox" class="tick" checked><svg viewBox="0 0 24 24"><use href="#inst"/></svg>实例几何体 (5)</label></li>
                    <li class="child"><i class="branch"></i><label><input type="checkbox" class="tick" checked><svg viewBox="0 0 24 24"><use href="#inst"/></svg>实例几何体 (6)</label></li>
                    <li class="child"><i class="branch"></i><label><input type="checkbox" class="tick" checked><svg viewBox="0 0 24 24"><path d="M2 2h9v9H2zM2 14h6v9H2zM11 14h12v9H11z" fill="#fff" stroke="#222" stroke-width="1.500"/><path d="M9 13L20 3" stroke="#e8a02a" stroke-width="3"/><path d="M18 4l3-3 2 3-3 2z" fill="#e22"/></svg>草图 (7) "SKETCH_000"</label></li>
                    <li class="child"><i class="branch"></i><label><input type="checkbox" class="tick" checked><svg viewBox="0 0 24 24"><use href="#extrude"/></svg>拉伸 (8)</label></li>
                    <li class="child off"><i class="branch last"></i><label><input type="checkbox" class="tick" checked><svg viewBox="0 0 24 24"><path d="M2 17l9-5 11 5-10 6z" fill="url(#gold)" stroke="#d8801a"/><path d="M5 12V4M2 7l3-4 3 4" stroke="#e02a1a" stroke-width="2.500" fill="none"/><ellipse cx="16" cy="5" rx="5" ry="3" fill="none" stroke="#e02a1a" stroke-width="1.500"/></svg>整体变形 (9)</label></li>
                </ul>
                <div class="scrollbar"><button class="sb left"></button><i class="thumb"></i><span class="spacer"></span><button class="sb right"></button></div>
            </div>
            <div class="splitter"><hr><i class="short"></i><hr></div>
        </section>

        <!-- Graphics window -->
        <section class="viewport">
            <svg class="scene" viewBox="627 237 1293 763" preserveAspectRatio="xMinYMin meet">
                <g id="flatBlock"></g>
                <g id="bentBlock"></g>
                <g id="triad">
                    <path d="M663 927l12-2 16 5v19l-15 3-15-6z" fill="#cfd1d4" stroke="#a9abae"/>
                    <path d="M663 927l14 4v20M677 931l14-1" fill="none" stroke="#a9abae"/>
                    <path d="M676 951l-23-7" stroke="#1a8a2a" stroke-width="3"/>
                    <path d="M676 951l20-2" stroke="#d22" stroke-width="3"/>
                    <path d="M676 949l3-25" stroke="#1540e8" stroke-width="3"/>
                    <path d="M675 926l4-9 3 10z" fill="#1540e8"/>
                    <circle cx="675" cy="951" r="3" fill="#aaa"/>
                    <text x="676" y="917" fill="#3a6ae8">Z</text><text x="645" y="946" fill="#3a9a4a">Y</text><text x="697" y="953" fill="#e04a4a">X</text>
                </g>
            </svg>
            <button class="ime"><svg width="20" height="20"><rect x="2" y="2" width="16" height="16" rx="3" fill="#f0501a" transform="rotate(-8 10 10)"/><path d="M14 6q-8-2-8 2 0 2 4 2t3 3q-2 2-7 0" fill="none" stroke="#fff" stroke-width="2"/></svg></button>
        </section>
    </main>

    <!-- Assemblies / direct sketch -->
    <div class="row bottom">
        <div class="bar">
            <span class="grip"></span>
            <button class="tool"><svg class="c-gold"><use href="#cube" transform="translate(5 7) scale(.75)"/><use href="#binoc" transform="scale(.6)"/></svg></button><i class="arr"></i>
            <button class="tool"><svg class="c-steel"><use href="#cube" transform="translate(1 -1) scale(.65)"/><use href="#cube" transform="translate(0 8) scale(.65)"/><use href="#cube" transform="translate(9 8) scale(.65)"/></svg></button>
            <button class="tool"><svg class="c-dim"><path d="M1 2h22v20H1z" fill="#8c96a6"/><use href="#cube" transform="translate(5 4) scale(.7)"/></svg></button>
            <button class="tool"><svg class="c-gold"><use href="#cube" transform="translate(-1 -1) scale(.65)"/><use href="#cube" transform="translate(3 9) scale(.65)"/><path d="M18 1v10M13 6h10" stroke="#1a4ae0" stroke-width="2.500"/></svg></button><i class="arr"></i>
            <button class="tool"><svg class="c-gold"><use href="#cube" transform="translate(4 4) scale(.7)"/><path d="M15 2h7v6M1 15v7h7" fill="none" stroke="#3a7ae0" stroke-width="2"/></svg></button>
            <button class="tool"><svg><use href="#mirror"/></svg></button>
            <button class="tool"><svg><path d="M1 4v10l6-5z" fill="#1a9a1a"/><path d="M3 14v9l6-6z" fill="#d22"/><path d="M13 10h10M18 1v9M11 22l5-8M16 22l5-8" stroke="#7a1a5a" stroke-width="1.500"/></svg></button>
            <i class="sep"></i>
            <button class="tool"><svg class="c-dim"><use href="#cube" transform="translate(7 -1) scale(.7)"/><use href="#cube" transform="translate(8 8) scale(.6)"/><path d="M1 21l8-8" stroke="#777" stroke-width="3"/></svg></button>
            <button class="tool"><svg class="c-gold"><use href="#cube" transform="translate(0 -1) scale(.55)"/><use href="#cube" transform="translate(0 10) scale(.55)"/><use href="#cube" transform="translate(11 10) scale(.55)"/></svg></button>
            <button class="tool"><svg stroke="#111" stroke-width="1.500"><path d="M3 15h7v7H3z" fill="#fea" stroke="#d22"/><path d="M8 9h6v6H8zM15 2h6v6h-6z" fill="#fff"/></svg></button>
            <i class="sep"></i>
            <button class="tool"><svg><path d="M12 0l11 6v12l-11 6L1 18V6z" fill="#ffd83a" stroke="#b8901a"/><use href="#diamond" transform="translate(2 2) scale(.82)"/></svg></button>
            <i class="sep"></i>
            <button class="tool"><svg><use href="#link"/></svg></button>
            <button class="tool"><svg><path d="M3 2h19v6H3zM4 8v7m-3-3l3 4 3-4" fill="none" stroke="#333" stroke-width="1.500"/><use href="#link" transform="translate(10 8) scale(.65)"/></svg></button>
            <button class="tool"><svg><use href="#link" x="-4" y="-3"/><use href="#ibox"/></svg></button>
            <button class="tool"><svg><path d="M1 12h8m0 0l6-8m-6 8h6m-6 0l5 8" stroke="#234" fill="none"/><path d="M14 1h9v5h-9zM14 8h9v3h-9z" fill="#cfe0ff" stroke="#2a4a9a"/><use href="#ibox"/></svg></button>
            <i class="sep"></i>
            <button class="tool"><svg><g class="c-orange"><use href="#cube" transform="translate(8 -2) scale(.7)"/></g><g class="c-dim"><use href="#cube" transform="translate(-1 9) scale(.65)"/></g><path d="M8 12l5-5" stroke="#999"/></svg></button><i class="arr"></i>
            <i class="more"></i>
        </div>
        <div class="bar">
            <span class="grip"></span>
            <button class="tool"><svg><path d="M2 2l15 3v18L2 19z" fill="#f4f6f4" stroke="#222" stroke-width="1.500"/><path d="M5 7h4v5H5zM11 8h4v5h-4zM5 15h4v4H5zM11 16h3v4h-3z" fill="none" stroke="#222"/><path d="M18 1v14M11 8h13M13 3l10 10M23 3L13 13" stroke="#e8d81a" stroke-width="1.500"/></svg></button>
            <button class="tool text dim"><svg><path d="M0 0h24v24H0z" fill="#8a9498"/><path d="M5 4l14 2v11L5 15z" fill="#b8bfc2" stroke="#556"/><path d="M5 4h5v4H5zM14 5h5v5h-5zM9 9h5v5H9z" fill="#566"/></svg>完成草图</button>
            <button class="tool"><svg fill="none" stroke="#111" stroke-width="1.500"><path d="M3 1v13q1 8 6 7 3-1 3-7 0-7 4-7 4 0 5 7"/><g fill="#e01818" stroke="none"><circle cx="3" cy="14" r="2"/><circle cx="12" cy="14" r="2"/><circle cx="21" cy="14" r="2"/></g></svg></button>
            <button class="tool"><svg><path d="M3 21L21 3" stroke="#111" stroke-width="1.500"/><circle cx="3" cy="21" r="2" fill="#e01818"/><circle cx="21" cy="3" r="2" fill="#e01818"/></svg></button>
            <button class="tool"><svg><path d="M2 3q18 0 19 18" fill="none" stroke="#111" stroke-width="1.500"/><g fill="#e01818"><circle cx="3" cy="3" r="2"/><circle cx="16" cy="8" r="2"/><circle cx="21" cy="21" r="2"/></g></svg></button>
            <button class="tool"><svg><circle cx="12" cy="12" r="10" fill="none" stroke="#111" stroke-width="1.500"/></svg></button>
            <button class="tool"><svg fill="none" stroke="#8a8a8a"><path d="M12 2h10v10" stroke-dasharray="2 2"/><path d="M2 2h10q9 0 10 10v10" stroke="#b08a8a" stroke-width="1.500"/></svg></button>
            <button class="tool"><svg fill="none" stroke="#8a8a8a"><path d="M11 2h11v10" stroke-dasharray="2 2"/><path d="M1 2h10l11 10v11" stroke="#b08a8a" stroke-width="1.500"/></svg></button>
            <button class="tool"><svg><path d="M3 4h18v16H3z" fill="none" stroke="#111" stroke-width="1.500"/><circle cx="3" cy="4" r="2" fill="#e01818"/><circle cx="21" cy="20" r="2" fill="#e01818"/></svg></button>
            <button class="tool"><svg><path d="M2 13q3 2 5-3t4 0q3 8 6 3t5-6M3 12l5-10 7 19 7-12" fill="none" stroke="#777" stroke-width="1.500"/><g fill="#777"><circle cx="3" cy="12" r="2"/><circle cx="21" cy="9" r="2"/><circle cx="8" cy="2" r="2"/><circle cx="15" cy="21" r="2"/></g><g fill="#e01818"><circle cx="8" cy="10" r="2"/><circle cx="15" cy="15" r="2"/></g></svg></button>
            <button class="tool"><svg><path d="M12 2v20M2 12h20" stroke="#111" stroke-width="2"/></svg></button>
            <button class="tool"><svg fill="none" stroke="#9a9a9a" stroke-width="1.500"><path d="M2 22V6l9-4q12 4 11 12t-8 8z"/><path d="M6 18V9l5-2q7 3 6 6t-4 5z" stroke="#c09a9a"/></svg></button><i class="arr"></i>
            <i class="sep"></i>
            <button class="tool"><svg><path d="M2 3l10 18M1 18h20" stroke="#9a9a9a" stroke-width="1.500"/><use href="#eraser"/></svg></button>
            <button class="tool"><svg><path d="M5 3l7 18M1 14h11l8-12" fill="none" stroke="#9a9a9a" stroke-width="1.500"/><use href="#eraser"/></svg></button>
            <button class="tool"><svg fill="none" stroke="#9a9a9a" stroke-width="1.500"><path d="M14 1v22M1 12h22"/><path d="M6 4l14 14" stroke="#b88"/></svg></button>
            <i class="sep"></i>
            <button class="tool"><svg fill="none" stroke="#8a8a8a" stroke-width="1.500"><path d="M2 8v13M22 8v13M2 15h20M2 15l4-3v6zM22 15l-4-3v6z"/><path d="M15 1L8 10h5l-4 8 10-10h-5z" fill="#b0a470"/></svg></button><i class="arr"></i>
            <i class="sep"></i>
            <button class="tool"><svg fill="none" stroke="#9a9a9a" stroke-width="1.500"><path d="M2 11l7-9M7 11l7-9M17 9v12M11 21h12"/></svg></button>
            <button class="tool"><svg fill="none" stroke="#77759a" stroke-width="1.500"><path d="M8 3H2v18h20V3h-6"/><path d="M12 0v24" stroke="#666" stroke-dasharray="4 2"/><path d="M8 3v7M16 3v7" stroke="#a06aa0"/></svg></button>
            <button class="tool"><svg fill="none" stroke="#9a8a94" stroke-width="1.500"><path d="M1 8v9l5-4z" fill="#5a9a6a" stroke="none"/><path d="M9 11l6-9M14 11l6-9M16 13v9M11 22h11"/></svg></button><i class="arr"></i>
            <i class="sep"></i>
            <button class="tool"><svg fill="#ddd" stroke="#777" stroke-width="1.500"><path d="M2 1h10v10H2zM11 13h11v10H11zM2 15h6v8H2z"/><path d="M12 13l9-9" stroke="#a8986a" stroke-width="3"/></svg></button>
            <button class="tool"><svg class="c-dim"><path d="M11 3q-9-3-9 4t7 4" fill="none" stroke="#6a7486" stroke-width="2"/><use href="#cube" transform="translate(1 9) scale(.65)"/><path d="M12 12l9-10" stroke="#a8986a" stroke-width="3"/><path d="M15 14h8v8h-8z" fill="#7a8090"/></svg></button>
            <button class="tool"><svg class="c-dim"><path d="M11 3q-9-3-9 4t7 4" fill="none" stroke="#6a7486" stroke-width="2"/><use href="#cube" transform="translate(1 9) scale(.65)"/><use href="#cube" transform="translate(9 5) scale(.65)"/></svg></button>
            <i class="more"></i>
        </div>
    </div>

    <footer class="taskbar">
        <button class="start"><svg width="17" height="17"><path d="M1 4q4-3 7 0l-1 5q-4-3-7 0z" fill="#e8502a"/><path d="M9 4q4 2 7-1l-1 6q-4 2-7 0z" fill="#5ab82a"/><path d="M0 10q4-3 7 0l-1 5q-4-3-6 0z" fill="#2a7ae8"/><path d="M8 10q4 2 7 0l-1 5q-4 2-7 0z" fill="#f5c01a"/></svg>开始</button>
        <button class="quick"><svg viewBox="0 0 32 32"><rect width="32" height="32" rx="3" fill="#1a7ad0"/><path d="M7 4q3 4 9 2t9-2M5 27q4-4 9-3" fill="none" stroke="#fff" stroke-width="3"/><circle cx="15" cy="15" r="8" fill="none" stroke="#fff" stroke-width="3"/><path d="M15 11v6l4 3" stroke="#fff" stroke-width="2" fill="none"/><path d="M20 29v-8l4 5 4-5v8" stroke="#f5e81a" stroke-width="2" fill="none"/></svg></button>
        <button class="task current"><svg viewBox="0 0 24 24"><use href="#nx"/></svg>NX 8.5 - 建模...</button>
        <button class="quick"><svg viewBox="0 0 32 32"><path d="M3 20Q2 7 16 6t13 12q-2 5-8 4-3 0-3 4 0 4-5 4Q4 29 3 20z" fill="#c8dcec" stroke="#6a8aa8"/><circle cx="10" cy="13" r="2.500" fill="#3a8ae0"/><circle cx="17" cy="11" r="2.500" fill="#4ab84a"/><circle cx="8" cy="20" r="2.500" fill="#e84a3a"/><path d="M14 28L28 3" stroke="#b87a3a" stroke-width="3"/></svg></button>
        <button class="quick"><svg viewBox="0 0 24 24"><use href="#nx"/></svg></button>
        <button class="quick"><svg viewBox="0 0 32 32"><path d="M10 3l19 3-7 23-19-4z" fill="#8ac4d4" stroke="#5a8a9a"/><path d="M10 3l19 3-1 4-19-3z" fill="#e8f0f2"/><path d="M22 29l7-23 1 20z" fill="#e8e8e8"/></svg></button>
        <button class="quick"><svg viewBox="0 0 24 24"><use href="#nx"/></svg></button>
        <button class="quick"><svg viewBox="0 0 32 32"><path d="M8 2h22v28H4V8z" fill="#f4faf2" stroke="#2a8a3a" stroke-width="1.500"/><path d="M18 7h9M18 12h9M18 17h9M18 22h9" stroke="#6ab86a" stroke-width="2"/><path d="M5 8l12 16M17 8L5 24" stroke="#1a8a2a" stroke-width="5"/></svg></button>
        <button class="quick"><svg viewBox="0 0 32 32"><path d="M1 7l15-6 15 6v18l-15 6-15-6z" fill="#c81818"/><path d="M1 7l15-6 15 6-15 5z" fill="#f06a6a"/><path d="M16 12l15-5v18l-15 6z" fill="#9a0e0e"/><g fill="none" stroke="#fff" stroke-width="2"><path d="M12 14q-7-3-7 1t6 4-1 5l-6-2M18 14l2 9 3-7 3 5 2-11"/></g></svg></button>
        <button class="quick"><svg viewBox="0 0 32 32"><path d="M5 1h22v30H5z" fill="#d8eaf8" stroke="#6a9ac8" stroke-width="1.500"/><path d="M8 4h16v8H8z" fill="#8ac0ec"/><path d="M8 16h16M8 20h16M8 24h16M8 28h16" stroke="#5a94cc" stroke-width="2" stroke-dasharray="3 1"/></svg></button>
        <button class="quick"><svg viewBox="0 0 32 32"><path d="M0 0h32v32H0z" fill="#05060a"/><circle cx="24" cy="13" r="8" fill="#c8743a"/><path d="M19 12q4 10 0 20h6q4-10-2-20z" fill="#3ac0e8"/><path d="M3 3h8q0 4-6 5 7 1 3 6t-7 4M14 8q5 4 0 10M21 8q-6 1-3 4t-3 6" fill="none" stroke="#fff" stroke-width="1.500"/></svg></button>
        <button class="quick"><svg viewBox="0 0 32 32"><path d="M6 1h23v30H2V6z" fill="#f2f6fc" stroke="#2a5aa8" stroke-width="1.500"/><path d="M4 8l4 14 4-11 4 11 5-14" fill="none" stroke="#1a4aa8" stroke-width="4"/><path d="M14 24h12M14 28h12" stroke="#8aa8d8" stroke-width="2"/></svg></button>
        <button class="quick"><svg viewBox="0 0 32 32"><path d="M16 16L9 2q8-4 12 0z" fill="#a83ad0"/><path d="M16 16l5-14q9 3 9 10z" fill="#e82a5a"/><path d="M16 16l14-4q3 9-3 14z" fill="#e01818"/><path d="M16 16l11 10q-6 6-13 5z" fill="#f5c01a"/><path d="M16 16l-2 15q-8-1-11-7z" fill="#8ad01a"/><path d="M16 16L3 24q-4-9 0-13z" fill="#2ab82a"/><path d="M16 16L3 11q1-6 6-9z" fill="#2a6ae8"/><circle cx="16" cy="16" r="3" fill="#fff"/></svg></button>
        <button class="task"><svg viewBox="0 0 32 32"><path d="M6 2l13 4v24L6 25z" fill="#ffe9a0" stroke="#c8a83a"/><path d="M6 2l7-1 10 4v20l-4 5V6z" fill="#f3cf6a"/></svg>flex_002</button>
        <button class="task"><svg viewBox="0 0 32 32"><path d="M1 8l7-3v20l-7-4z" fill="#ddd" stroke="#555"/><path d="M8 3l22-1-3 19-17 2z" fill="#2b3a2b" stroke="#aaa" stroke-width="2"/><path d="M11 15l4-6 3 8 4-10 4 6" fill="none" stroke="#1ae02a" stroke-width="1.500"/><ellipse cx="18" cy="27" rx="9" ry="4" fill="#ddd" stroke="#999"/></svg>Windows 任务管理器</button>
        <span class="spacer"></span>
        <svg class="tray-s" width="16" height="16"><path d="M0 0h16v16H0z" fill="#5a6a78"/><path d="M12 4H5v4h7v4H4" fill="none" stroke="#bfe0f2" stroke-width="2"/></svg>
        <span class="grip"></span>
        <div class="tray">
            <svg viewBox="0 0 16 16"><circle cx="7" cy="7" r="7" fill="#3a9a2a"/><path d="M1 9q4-10 12-4l-3 8z" fill="#ffe01a"/><path d="M6 4v6M3 7h6" stroke="#1a7a1a" stroke-width="2"/><circle cx="12" cy="12" r="4" fill="#e01818"/><path d="M12 9v1M12 11v3" stroke="#fff" stroke-width="1.500"/></svg>
            <svg viewBox="0 0 16 16"><path d="M3 1h11v13H3z" fill="#0a7a0a" stroke="#053"/></svg>
            <svg viewBox="0 0 16 16"><path d="M1 1h6v5H1zM0 6h9v8H2z" fill="#777"/><circle cx="11" cy="11" r="5" fill="#2a9a2a"/><path d="M9 11l2 2 3-4" fill="none" stroke="#fff" stroke-width="1.500"/></svg>
            <svg viewBox="0 0 16 16"><path d="M1 1h4v5H3v8M6 3h9v9H6z" fill="#ddd" stroke="#444"/><path d="M7 7l8 8m0-8l-8 8" stroke="#e01818" stroke-width="2"/></svg>
            <svg viewBox="0 0 16 16"><path d="M1 5h4l5-4v13L5 10H1z" fill="#f4f4f4" stroke="#666"/><circle cx="11" cy="11" r="4.500" fill="#e03a2a"/><path d="M9 9l4 4m0-4l-4 4" stroke="#fff" stroke-width="1.500"/></svg>
            <svg viewBox="0 0 16 16"><path d="M2 15V1M2 2q4-2 6 1t7 1l-2 5q-4 1-6-1T2 8z" fill="#fff" stroke="#555"/></svg>
            <div class="clock"><span>18:04</span><span>2017/8/11</span></div>
            <svg viewBox="0 0 16 16"><path d="M1 2h14v11H1z" fill="#2a5ab8" stroke="#134"/><path d="M1 2h14L1 9z" fill="#6a9ae8"/></svg>
        </div>
    </footer>

    <!-- Deform dialog -->
    <form class="dialog" onsubmit="return false">
        <header class="dlg-title">
            <svg width="22" height="20"><circle cx="11" cy="10" r="4" fill="none" stroke="#fff" stroke-width="2"/><path d="M11 3v3M11 14v3M4 10h3M15 10h3M6 5l2 2M14 13l2 2M16 5l-2 2M8 13l-2 2" stroke="#fff" stroke-width="2"/></svg>
            <h1>整体变形</h1>
            <button><svg width="14" height="14"><path d="M8 3q4 2 2 6-4 3-8 0" fill="none" stroke="#fff" stroke-width="2"/><path d="M9 1v5H5z" fill="#fff"/></svg></button>
            <button><svg width="14" height="14"><path d="M2 2l9 10m0-10L2 12" stroke="#fff" stroke-width="3"/></svg></button>
        </header>
        <div class="dlg-body">
            <h3>类型<button class="fold"></button></h3>
            <div class="sect h-type">
                <div class="combo picked"><span><svg viewBox="0 0 24 24"><path d="M1 12l11-8 11 7q-6 2-12 10z" fill="#3a9a5a" stroke="#8ed8a8"/><path d="M5 10l9 8M9 7l9 7M5 15l11-8M9 18l10-8" stroke="#d8ffe4" fill="none"/></svg><select aria-label="类型"><option>按曲面</option></select></span><i class="drop"></i></div>
            </div>
            <h3>要变形的几何体<button class="fold"></button></h3>
            <div class="sect h-geo">
                <div class="pick hot"><svg width="13" height="13" viewBox="0 0 24 24"><use href="#check"/></svg><span>选择面或小平面体 (612)</span><button class="face hot"><svg width="26" height="26"><path d="M2 13L9 5q8 3 15 4l-5 4-6 8q-4-6-11-8z" fill="#d4d0f4" stroke="#c0185a" stroke-width="2"/><path d="M6 9l11 6M10 6l3 14M5 13l15-3M9 6L9 16l11-6-9 8" stroke="#4a4ac0" fill="none"/></svg></button></div>
            </div>
            <h3>方法<button class="fold"></button></h3>
            <div class="sect h-method">
                <label><input type="radio" name="method" checked>拉长</label>
                <label><input type="radio" name="method">加冠</label>
            </div>
            <h3>基本曲面<button class="fold"></button></h3>
            <div class="sect h-surface">
                <div class="pick"><svg width="13" height="13" viewBox="0 0 24 24"><use href="#check"/></svg><span>选择面 (1)</span><button class="face"><svg width="24" height="24"><use href="#target"/></svg></button></div>
                <fieldset>
                    <div class="legend">翻转 U/V 方向<i class="fold"></i></div>
                    <div class="checks"><label><input type="checkbox">U</label><label><input type="checkbox">V</label><label><input type="checkbox">法向</label></div>
                </fieldset>
            </div>
            <h3>控制曲面<button class="fold"></button></h3>
            <div class="sect h-surface">
                <div class="pick"><svg width="13" height="13" viewBox="0 0 24 24"><use href="#check"/></svg><span>选择面 (1)</span><button class="face"><svg width="24" height="24"><use href="#target"/></svg></button></div>
                <fieldset>
                    <div class="legend">翻转 U/V 方向<i class="fold"></i></div>
                    <div class="checks"><label><input type="checkbox">U</label><label><input type="checkbox">V</label><label><input type="checkbox">法向</label></div>
                </fieldset>
            </div>
            <h3>变形方向<button class="fold"></button></h3>
            <div class="sect h-dir">
                <div class="line"><label for="dir">方向</label><div class="combo w-dir"><select id="dir"><option>垂直于控制体</option></select><i class="drop"></i></div></div>
                <div class="line"><label for="flip">反向</label><button id="flip" class="flip"><svg width="18" height="18"><path d="M3 4l13 10" stroke="#222" stroke-width="1.500"/><path d="M17 1v5l-5-4zM2 17v-5l5 4z" fill="#1a1ac8"/><path d="M15 3l-4 5M4 15l3-3" stroke="#1a1ac8" stroke-width="2"/></svg></button></div>
            </div>
            <h3>形状控制<button class="fold"></button></h3>
            <div class="sect h-shape"><label><input type="checkbox">编辑极点</label></div>
            <h3>设置<button class="fold down"></button></h3>
            <h3>预览<button class="fold down"></button></h3>
            <div class="actions"><button class="ok">&lt; 确定 &gt;</button><button>取消</button></div>
        </div>
        <div class="dlg-foot"></div>
    </form>

    <!-- Pen notes drawn over the windows -->
    <svg class="notes">
        <path d="M849 455L840 457 836 463 838 469 842 473 847 476M842 467L887 477 920 483 987 492 1033 499 1060 502 1110 508H1343"/>
        <path d="M837 552L830 561 829 567 822 579 853 580 866 583M832 571L835 568 853 569 887 575 907 581 947 588 960 595 980 601 1020 619 1040 631 1060 650 1072 668 1080 690 1085 720 1086 740 1092 771 1102 790 1114 802 1139 823 1153 832H1187"/>
        <path d="M871 700L873 687 878 682 892 680H920L960 688 987 695 1010 703 1033 717 1048 730 1053 740 1048 753 1030 761 993 760 950 750 907 733 880 717 868 705V700L897 697 920 698 951 701"/>
    </svg>

    <div class="watermark">
        <svg width="72" height="82"><path d="M36 0l36 20v42L36 82 0 62V20z" fill="#5ab8e8" opacity=".75"/><path d="M36 0l36 20-22-6q-30-6-50 6z" fill="#d0ecfa" opacity=".8"/><path d="M36 23l16 9v19l-16 9-16-9V32z" fill="#49a6da"/><path d="M36 18l20 12v25L36 66 16 55V30zM20 32l16 9 16-9M36 41v20M16 30Q20 8 0 17M50 10q12 25 2 50 18-4 20-20M16 55q10 18 38 18" fill="none" stroke="#e6f4fb" stroke-width="2"/></svg>
        <div><b>3D世界网</b><small>WWW.3DSJW.COM</small></div>
    </div>

    <script src="scene.js"></script>
</body>
</html>
```
FILE: styles.css
```css
* {
    box-sizing: border-box;
}
body {
    margin: 0;
    height: 100vh;
    display: flex;
    flex-direction: column;
    overflow: hidden;
    font-family: "Noto Sans", "Noto Sans CJK SC", sans-serif;
    font-size: 12px;
    line-height: 16px;
    color: #222;
    background: #d4d0c8;
}
button, select, input {
    font: inherit;
    color: inherit;
    margin: 0;
}
button {
    padding: 0;
    border: 0;
    background: none;
}
h1, h2, h3 {
    margin: 0;
}
svg {
    display: block;
    flex: none;
}
.sprite {
    position: absolute;
    width: 0;
    height: 0;
}
.spacer {
    flex: 1;
}

/* Icon colours */
.c-blue { color: #4c78ee; }
.c-mix { color: #fb8a1e; }
.c-pale { color: #fbc9a8; }
.c-gold { color: #fbc21a; }
.c-steel { color: #9fb2d6; }
.c-dim { color: #8b8f94; }
.c-orange { color: #f78a1c; }

/* Title and menu */
.titlebar {
    height: 21px;
    display: flex;
    align-items: center;
    gap: 5px;
    padding: 0 5px 0 2px;
    background: linear-gradient(#000 0, #000 1px, #77777c 2px, #45454a 7px, #1c1c1c 8px, #1c1c1c 19px, #000);
    color: #fff;
    font-family: "Liberation Mono", "Noto Sans CJK SC", monospace;
    font-weight: bold;
}
.titlebar > svg {
    width: 18px;
    height: 18px;
}
.title {
    flex: 1;
    white-space: pre;
}
.brand {
    font-family: "Liberation Sans", sans-serif;
    font-size: 13px;
    margin-right: 16px;
}
.win {
    width: 18px;
    height: 16px;
    padding: 2px 3px;
    border: 1px solid #777;
    background: #2a2a2a;
}
.win.close {
    background: #c03a2a;
}
.menubar {
    height: 26px;
    display: flex;
    align-items: center;
    background: linear-gradient(#ececec, #e0e0e0);
    border-bottom: 1px solid #b8b8b8;
    padding-right: 4px;
}
.menubar a {
    color: #111;
    text-decoration: none;
    padding: 0 7px;
}
.menubar a:first-of-type {
    padding-left: 4px;
}
.mdi {
    width: 18px;
    height: 16px;
    margin-left: 3px;
    display: flex;
    align-items: center;
    justify-content: center;
    border: 1px solid #aaa;
    background: #f0f0f0;
}
.prompt .mdi {
    border: 0;
    background: none;
}
.prompt .mdi.on {
    background: #c0ccd8;
}

/* Toolbars */
.toolbars {
    background: linear-gradient(#e2e2e2, #c9c9c9);
    height: 137px;
    padding-top: 1px;
}
.row {
    display: flex;
    height: 34px;
}
.bar {
    display: flex;
    align-items: center;
    background: linear-gradient(#e9e9e9, #cfcfcf);
    border-right: 1px solid #b4b4b4;
    border-bottom: 1px solid #b9b9b9;
    border-top: 1px solid #f0f0f0;
}
.gap-large {
    margin-left: 91px;
}
.gap-small {
    margin-left: 30px;
}
.grip {
    width: 3px;
    height: 24px;
    margin: 0 0 0 4px;
    background: repeating-linear-gradient(#a5a5a5 0 2px, transparent 2px 4px);
}
.tool {
    width: 31px;
    height: 30px;
    flex: none;
    display: flex;
    align-items: center;
    justify-content: center;
    color: #111;
}
.tool svg {
    width: 24px;
    height: 24px;
}
.tool.text {
    width: auto;
    padding-left: 3px;
    gap: 4px;
    white-space: nowrap;
}
.tool.find {
    padding-left: 5px;
    padding-right: 1px;
}
.tool.dim {
    color: #888;
    padding-left: 2px;
    gap: 3px;
}
.arr {
    width: 12px;
    display: flex;
    justify-content: center;
}
.arr::before, .more::before {
    content: "";
    border: 3px solid transparent;
    border-top: 4px solid #111;
    border-bottom: 0;
}
.more {
    width: 14px;
    height: 22px;
    display: flex;
    align-items: flex-end;
    justify-content: center;
}
.arr + .more {
    width: 10px;
}
.sep {
    width: 2px;
    height: 30px;
    margin: 0 2px;
    border-left: 1px solid #adadad;
    border-right: 1px solid #f4f4f4;
}
.row.bottom {
    background: linear-gradient(#e4e4e4, #cacaca);
    border-bottom: 1px solid #000;
    height: 35px;
}

/* Selection bar */
.selection {
    height: 30px;
    display: flex;
    align-items: center;
    padding-left: 6px;
    background: linear-gradient(#9c9c9c 0, #c4c4c4 2px, #dcdcdc 10px, #d0d0d0);
}
.combo {
    height: 20px;
    display: flex;
    background: #fff;
    border: 1px solid #666;
    border-radius: 3px;
    box-shadow: 0 0 0 1px #e8e8e8;
    overflow: hidden;
}
.combo select {
    flex: 1;
    min-width: 0;
    appearance: none;
    border: 0;
    padding: 0 2px;
    background: transparent;
}
.drop {
    width: 16px;
    display: flex;
    align-items: center;
    justify-content: center;
    background: linear-gradient(#eef6ff, #7fb8ea 50%, #5c9fe0 51%, #a8dcff);
    border-left: 1px solid #667;
}
.drop::before {
    content: "";
    border: 5px solid transparent;
    border-top: 7px solid #111;
    border-bottom: 0;
}
.w-type { width: 142px; margin-right: 8px; }
.w-scope { width: 149px; margin-right: 4px; }
.w-rule { width: 149px; margin-left: 3px; }
.w-dir { width: 129px; }
.mini {
    width: 23px;
    height: 20px;
    display: flex;
    align-items: center;
    justify-content: center;
}
.mini svg {
    width: 18px;
    height: 18px;
}
.mini.next {
    width: 30px;
}
.selection .arr {
    width: 10px;
}
.snaps {
    display: flex;
    gap: 7px;
    padding: 0 2px;
}
.snaps svg {
    width: 16px;
    height: 16px;
    fill: none;
    stroke: #777;
}
.prompt {
    height: 23px;
    display: flex;
    align-items: center;
    padding: 0 4px 2px 3px;
    background: #d9d9d9;
    border-top: 1px solid #f2f2f2;
    border-bottom: 1px solid #999;
}
.prompt strong {
    font-size: 13px;
}
.cell {
    width: 20px;
    height: 20px;
    border-left: 1px solid #aaa;
}
.cell.wide {
    width: 46px;
}

/* Resource bar */
.workspace {
    flex: 1;
    min-height: 0;
    display: flex;
}
.resource {
    width: 33px;
    padding: 15px 0 0 5px;
    background: linear-gradient(90deg, #a9a9a9, #b5b5b5 24px, #8c8c8c);
    display: flex;
    flex-direction: column;
    gap: 2px;
}
.tab {
    height: 40px;
    flex: none;
    display: flex;
    align-items: center;
    justify-content: center;
    border: 1px solid #666;
    border-right-color: #888;
    border-radius: 4px 0 0 4px;
    background: linear-gradient(#e2e2e2, #cfcfcf);
}
.tab.active {
    height: 43px;
    background: #ededed;
    border-right: 0;
}
.tab.spaced {
    margin-top: 12px;
}
.tab svg {
    width: 24px;
    height: 24px;
}

/* Navigators */
.panel {
    display: flex;
    flex-direction: column;
    background: #ebebeb;
}
.assembly {
    width: 341px;
    padding: 0 10px 0 9px;
    border-right: 2px solid #777;
    border-bottom: 1px solid #888;
}
.part {
    width: 253px;
    padding: 0 10px 0 4px;
}
.panel-head {
    height: 31px;
    display: flex;
    align-items: center;
    gap: 12px;
    padding-left: 5px;
}
.panel-head h2 {
    font-size: 13px;
    line-height: 18px;
    color: #111;
}
.part-head {
    height: 21px;
    display: flex;
    align-items: center;
    gap: 6px;
    padding-left: 5px;
}
.dots {
    flex: 1;
    height: 2px;
    background: repeating-linear-gradient(90deg, #999 0 2px, transparent 2px 4px);
}
.up {
    border: 4px solid transparent;
    border-top: 0;
    border-bottom: 4px solid #777;
}
.x {
    width: 14px;
    font-size: 11px;
    font-weight: bold;
    color: #000;
}
.listbox {
    flex: 1;
    min-height: 0;
    display: flex;
    flex-direction: column;
    border: 1px solid #666;
    padding: 1px;
    background: #fff;
}
.list-head {
    height: 20px;
    flex: none;
    display: flex;
    align-items: center;
    gap: 16px;
    padding-left: 5px;
    background: linear-gradient(#f2f4f4 0, #eceeee 50%, #dcdedf 51%, #d6d8da);
    border-bottom: 1px solid #888;
    color: #111;
}
.sort {
    border: 5px solid transparent;
    border-top: 0;
    border-bottom: 5px solid #111;
}
.tree {
    flex: 1;
    min-height: 0;
    margin: 0;
    padding: 0;
    list-style: none;
    overflow: hidden;
    background: repeating-linear-gradient(#fff 0 19px, #e4e4e4 19px 20px, #f7f7f7 20px 39px, #e4e4e4 39px 40px);
}
.tree li, .tree label {
    height: 20px;
    display: flex;
    align-items: center;
    white-space: nowrap;
}
.tree li {
    padding-left: 8px;
    color: #2c2c2c;
}
.tree svg {
    width: 16px;
    height: 16px;
    margin-right: 2px;
}
.tree .small-check {
    width: 13px;
}
.branch {
    width: 10px;
    height: 20px;
    margin-right: 1px;
    border-left: 1px dotted #777;
    background: repeating-linear-gradient(90deg, #888 0 1px, transparent 1px 2px) 0 9px / 100% 1px no-repeat;
}
.branch.last {
    height: 10px;
    align-self: flex-start;
}
.branch.first {
    height: 11px;
    align-self: flex-end;
    background-position: 0 0;
}
.part .tree li {
    padding-left: 9px;
}
.part .tree li.child {
    padding-left: 28px;
}
.part .tree li.off {
    color: #a4a4a4;
}
.part .tree .exp {
    width: 10px;
    height: 10px;
    margin: 0 6px 0 -5px;
    border: 1px solid #777;
    border-radius: 2px;
    background: #fff;
    font-size: 11px;
    line-height: 7px;
    color: #000;
}
.tick {
    appearance: none;
    width: 12px;
    height: 12px;
    margin: 0 2px 0 1px;
    border: 1px solid #000;
    background: #fff;
    flex: none;
}
.tick::before {
    content: "";
    display: block;
    width: 10px;
    height: 10px;
    background: #14b81c;
    clip-path: polygon(0 45%, 25% 40%, 42% 60%, 85% 0, 100% 10%, 45% 100%, 35% 95%);
}
.tick.red {
    margin-right: 3px;
}
.tick.red::before {
    background: #e01818;
}
.scrollbar {
    height: 16px;
    flex: none;
    display: flex;
    background: #eceae6;
}
.sb {
    width: 14px;
    display: flex;
    align-items: center;
    justify-content: center;
    background: #d4d0c8;
    border: 1px solid #fff;
    border-right-color: #444;
    border-bottom-color: #444;
}
.sb::before {
    content: "";
    border: 4px solid transparent;
}
.sb.left::before {
    border-right-color: #000;
    border-left: 0;
}
.sb.right::before {
    border-left-color: #000;
    border-right: 0;
}
.thumb {
    width: 42%;
    background: #d4d0c8;
    border: 1px solid #fff;
    border-right-color: #444;
    border-bottom-color: #444;
}
.thumb.long {
    width: 43%;
}
.splitter {
    height: 18px;
    flex: none;
    display: flex;
    align-items: center;
    gap: 4px;
    padding-bottom: 6px;
}
.splitter hr {
    flex: 1;
    margin: 0;
    border: 0;
    border-top: 1px solid #bbb;
    border-bottom: 1px solid #fff;
}
.splitter i {
    width: 57px;
    height: 6px;
    background: #ccc;
    border: 1px solid #fff;
    border-right-color: #888;
    border-bottom-color: #888;
}
.splitter .short {
    width: 43px;
}

/* Graphics window */
.viewport {
    position: relative;
    flex: 1;
    min-width: 0;
    background: linear-gradient(#b4b5b7, #d5d6d8 47%, #e5e7e9 75%, #e7e9ea);
}
.scene {
    width: 100%;
    height: 100%;
}
.scene text {
    font-family: "Liberation Sans", sans-serif;
    font-size: 10px;
}
.ime {
    position: absolute;
    right: 12px;
    bottom: 22px;
    border: 1px solid #9ab;
    background: #fff;
}

/* Taskbar */
.taskbar {
    height: 45px;
    display: flex;
    align-items: center;
    padding: 3px 3px 0 2px;
    background: #d4d0c8;
    border-top: 2px solid #000;
    box-shadow: inset 0 2px 0 #f4f2ee;
    color: #000;
}
.start, .task {
    height: 38px;
    display: flex;
    align-items: center;
    border: 1px solid #fff;
    border-right: 2px solid #555;
    border-bottom: 2px solid #555;
}
.start {
    width: 47px;
    gap: 1px;
    padding-left: 1px;
}
.quick {
    width: 50px;
    height: 32px;
    display: flex;
    justify-content: center;
}
.start + .quick {
    width: 59px;
    padding-left: 7px;
}
.quick svg {
    width: 32px;
    height: 32px;
}
.task {
    width: 160px;
    margin-right: 2px;
    padding-left: 3px;
    gap: 4px;
    font-family: "Liberation Mono", "Noto Sans CJK SC", monospace;
    font-size: 11px;
    white-space: nowrap;
}
.task svg {
    width: 32px;
    height: 32px;
}
.task.current {
    background: #fff;
    border: 1px solid #888;
    border-top: 2px solid #444;
    border-left: 2px solid #444;
    font-size: 12px;
    font-weight: bold;
}
.tray-s {
    margin-right: 5px;
}
.taskbar > .grip {
    width: 2px;
    height: 20px;
    margin: 0 3px 0 0;
    background: #fff;
    border-left: 1px solid #888;
}
.tray {
    height: 38px;
    display: flex;
    align-items: center;
    gap: 8px;
    padding: 0 1px 0 7px;
    border: 1px solid #fff;
    border-top-color: #888;
    border-left-color: #888;
}
.tray svg {
    width: 16px;
    height: 16px;
}
.clock {
    display: flex;
    flex-direction: column;
    align-items: center;
    width: 54px;
    font-family: "Liberation Mono", monospace;
    font-size: 10px;
}

/* Dialog */
.dialog {
    position: absolute;
    left: 725px;
    top: 195px;
    width: 317px;
    color: #111;
}
.dlg-title {
    height: 21px;
    display: flex;
    align-items: center;
    background: linear-gradient(#6a6a6e, #3c3c40 8px, #161616 9px, #1c1c1c);
    border: 1px solid #000;
    border-radius: 7px 7px 0 0;
}
.dlg-title h1 {
    flex: 1;
    padding-left: 6px;
    border-left: 1px solid #888;
    font-size: 16px;
    line-height: 19px;
    font-weight: normal;
    color: #fff;
}
.dlg-title button {
    width: 22px;
    height: 19px;
    padding-left: 4px;
    border-left: 1px solid #888;
}
.dlg-body {
    background: #ebebeb;
    border: 1px solid #777;
    border-width: 0 1px;
    padding: 5px 6px 12px;
}
.dlg-body h3 {
    height: 22px;
    display: flex;
    align-items: center;
    justify-content: space-between;
    padding-left: 5px;
    background: linear-gradient(#fff 0, #f2f3f3 50%, #dedfe0 51%, #d8dadc);
    border-bottom: 1px solid #8c8c8c;
    font-size: 13px;
    line-height: 20px;
}
.dlg-body h3 + h3 {
    margin-top: 1px;
}
.fold {
    display: flex;
    align-items: center;
    justify-content: center;
}
h3 .fold {
    width: 23px;
    height: 21px;
    border-left: 1px solid #aaa;
}
.fold::before {
    content: "";
    width: 12px;
    height: 9px;
    background: #6a6a6a;
    clip-path: polygon(50% 0, 100% 100%, 72% 100%, 50% 45%, 28% 100%, 0 100%);
}
.fold.down::before {
    transform: rotate(180deg);
}
.sect {
    background: #d3d3d3;
    border: 1px solid #a0a0a0;
    border-width: 0 1px;
    box-shadow: inset 0 2px 2px #b4b4b4;
    padding: 8px 8px 8px 7px;
}
.h-type { height: 42px; }
.h-geo { height: 48px; padding-top: 7px; }
.h-method { height: 35px; display: flex; gap: 14px; padding-top: 7px; }
.h-surface { height: 108px; }
.h-dir { height: 65px; }
.h-shape { height: 36px; padding-top: 10px; }
.sect label {
    display: flex;
    align-items: center;
    gap: 2px;
}
.h-method label, .h-shape label {
    height: 16px;
}
.picked {
    height: 24px;
    padding: 1px;
}
.picked span {
    flex: 1;
    display: flex;
    align-items: center;
    padding-left: 2px;
    background: #0a246a;
    border: 1px dotted #e8d8a0;
}
.picked span svg {
    width: 16px;
    height: 16px;
}
.picked select {
    color: #fff;
    padding-left: 3px;
}
.picked select option {
    color: #111;
}
.pick {
    height: 31px;
    display: flex;
    align-items: center;
    gap: 5px;
    padding-left: 2px;
}
.pick.hot {
    border-radius: 5px;
    background: linear-gradient(90deg, #e3a76c, #e1ab76 35%, #d3d3d3 85%);
}
.pick span {
    flex: 1;
}
.face {
    width: 30px;
    height: 31px;
    display: flex;
    align-items: center;
    justify-content: center;
    border: 1px solid #666;
    border-radius: 3px;
    background: linear-gradient(#fafafa, #cfcfcf);
}
.face.hot {
    border-color: #b85a2a;
    background: linear-gradient(#f5854a, #ffe0c8);
}
fieldset {
    min-width: 0;
    height: 58px;
    margin: 2px 0 0;
    padding: 4px 4px 4px 8px;
    background: #c3c3c3;
    border: 1px solid #8a8a8a;
    border-right-color: #eee;
    border-bottom-color: #eee;
}
.legend {
    display: flex;
    align-items: center;
    justify-content: space-between;
    font-weight: bold;
    line-height: 16px;
}
.checks {
    display: grid;
    grid-template-columns: 8fr 7fr 3fr;
    margin-top: 10px;
    white-space: nowrap;
}
.sect input {
    appearance: none;
    width: 16px;
    height: 16px;
    flex: none;
    border: 1px solid #666;
    border-radius: 3px;
    background: linear-gradient(#fff, #d0d0d0 50%, #e8e8e8);
}
.sect input[type="radio"] {
    border-radius: 50%;
}
.sect input[type="radio"]:checked {
    background: radial-gradient(circle, #0a2a6a 0 3px, #7fd4f8 4px, #b8ecff 8px);
    border-color: #235;
}
.line {
    display: flex;
    align-items: center;
    justify-content: space-between;
    margin-bottom: 4px;
}
.flip {
    width: 22px;
    height: 22px;
    display: flex;
    align-items: center;
    justify-content: center;
    border: 1px solid #666;
    border-radius: 3px;
    background: linear-gradient(#fafafa, #cfcfcf);
}
.actions {
    display: flex;
    justify-content: flex-end;
    gap: 7px;
    margin-top: 4px;
    padding: 5px 10px 0 0;
    border-top: 1px solid #aaa;
}
.actions button {
    width: 52px;
    height: 21px;
    white-space: nowrap;
    border: 1px solid #666;
    border-radius: 3px;
    background: linear-gradient(#fff, #e4e4e4 50%, #d0d0d0 51%, #e8e8e8);
}
.actions .ok {
    background: linear-gradient(#e0ffd0, #a8e890 45%, #7fce68 50%, #b4ffa0);
}
.dlg-foot {
    height: 8px;
    background: #1a1a1a;
    border-top: 1px solid #888;
    border-radius: 0 0 5px 5px;
}

/* Overlays */
.notes {
    position: absolute;
    left: 0;
    top: 0;
    width: 100%;
    height: 100%;
    pointer-events: none;
    fill: none;
    stroke: #000;
}
.watermark {
    position: absolute;
    right: 25px;
    bottom: 13px;
    display: flex;
    gap: 8px;
    align-items: center;
    opacity: 0.6;
    color: #fff;
    pointer-events: none;
    font-family: "Liberation Sans", "Noto Sans CJK SC", sans-serif;
}
.watermark div {
    display: flex;
    flex-direction: column;
    align-items: center;
}
.watermark b {
    font-size: 42px;
    line-height: 44px;
}
.watermark small {
    font-size: 16px;
    line-height: 12px;
}
```
FILE: scene.js
```js
// Draws the two solids of the graphics window
const NS = "http://www.w3.org/2000/svg";
const flat = document.getElementById("flatBlock");
const bent = document.getElementById("bentBlock");

function add(parent, tag, attrs) {
    const el = document.createElementNS(NS, tag);
    for (const key in attrs) el.setAttribute(key, attrs[key]);
    parent.appendChild(el);
    return el;
}
function poly(parent, pts, fill, stroke, width) {
    return add(parent, "polygon", {
        points: pts.map(p => p.join(",")).join(" "),
        fill: fill, stroke: stroke || "none", "stroke-width": width || 1, "stroke-linejoin": "round"
    });
}
function path(parent, d, stroke, width, dash) {
    return add(parent, "path", { d: d, fill: "none", stroke: stroke, "stroke-width": width, "stroke-dasharray": dash || "none" });
}
function label(parent, x, y, text, fill) {
    add(parent, "text", { x: x, y: y, fill: fill }).textContent = text;
}
function ring(parent, x, y, color) {
    add(parent, "circle", { cx: x, cy: y, r: 3, fill: "none", stroke: color || "#666" });
}
function mix(a, b, t) {
    return [a[0] + (b[0] - a[0]) * t, a[1] + (b[1] - a[1]) * t];
}
function seg(a, b) {
    return "M" + a[0].toFixed(1) + " " + a[1].toFixed(1) + "L" + b[0].toFixed(1) + " " + b[1].toFixed(1);
}
// Point at t (0..1) along a polyline
function along(pts, t) {
    const len = [0];
    for (let i = 1; i < pts.length; i++) {
        len.push(len[i - 1] + Math.hypot(pts[i][0] - pts[i - 1][0], pts[i][1] - pts[i - 1][1]));
    }
    const want = t * len[len.length - 1];
    let k = 1;
    while (k < pts.length - 1 && len[k] < want) k++;
    return mix(pts[k - 1], pts[k], (want - len[k - 1]) / (len[k] - len[k - 1]));
}
let seed = 7;
function rnd() {
    seed = (seed * 16807) % 2147483647;
    return seed / 2147483647;
}

// Flat block
function drawFlat() {
    const A = [1255, 398], B = [1508, 380], C = [1768, 455], D = [1516, 471];
    const A2 = [1247, 458], C2 = [1761, 515], D2 = [1511, 531];
    const line = "#f79f47";
    poly(flat, [[1244, 487], [1506, 560], [1755, 543], [1494, 471]], "#ffff00");
    path(flat, "M1244 487L1506 560M1673 521L1755 543M1244 487L1333 481", "#664", 1, "6 2");
    path(flat, "M1506 560L1755 543", "#3a5ae8", 2);
    poly(flat, [A, D, D2, A2], "#b97835", line, 3);
    poly(flat, [D, C, C2, D2], "#d68a3d", line, 3);

    // back edges bulge a little between the ribs
    let edge = "M" + A.join(" ");
    for (let i = 1; i <= 6; i++) {
        const p = mix(A, B, i / 6), m = mix(A, B, (i - 0.5) / 6);
        edge += "Q" + m[0] + " " + (m[1] - 3) + " " + p[0] + " " + p[1];
    }
    for (let i = 1; i <= 6; i++) {
        const p = mix(B, C, i / 6), m = mix(B, C, (i - 0.5) / 6);
        edge += "Q" + m[0] + " " + (m[1] - 4) + " " + p[0] + " " + p[1];
    }
    add(flat, "path", { d: edge + "L" + D.join(" ") + "Z", fill: "#ffc65c", stroke: line, "stroke-width": 3, "stroke-linejoin": "round" });

    const P = (i, j) => mix(mix(A, B, i / 6), mix(D, C, i / 6), j / 6);
    let d = "";
    for (let i = 0; i < 6; i++) {
        for (let j = 0; j < 6; j++) {
            d += seg(P(i, j), P(i + 1, j)) + seg(P(i, j), P(i, j + 1)) + seg(P(i + 1, j), P(i, j + 1));
        }
        d += seg(mix(A, D, i / 6), mix(A2, D2, i / 6)) + seg(mix(D, C, i / 6), mix(D2, C2, i / 6));
    }
    path(flat, d, line, 2);
    path(flat, "M1333 481L1494 471L1673 521", "#ddd0c0", 1, "2 2");
    ring(flat, 1244, 487);
    ring(flat, 1494, 471, "#ddd");
    ring(flat, 1506, 560);
    path(flat, "M1627 421L1621 474M1507 558L1513 508", "#8a7a3a", 3);
    poly(flat, [[1617, 471], [1625, 471], [1620, 483]], "#8a7a3a");
    poly(flat, [[1509, 512], [1516, 512], [1513, 499]], "#8a7a3a");
    label(flat, 1627, 421, "D", "#9a6a2a");
    path(flat, "M1725 531L1766 543L1764 547L1728 549", "#a8642a", 3);
    poly(flat, [[1715, 529], [1734, 530], [1731, 536]], "#9a5a24");
    poly(flat, [[1718, 549], [1735, 546], [1735, 552]], "#9a5a24");
    ring(flat, 1756, 543, "#bbb");
    label(flat, 1737, 530, "V", "#b87a4a");
}

// Grid of triangulated cells between two polylines
function mesh(parent, top, bottom, cols, rows, stroke, width, cross) {
    const P = (i, j) => mix(along(top, i / cols), along(bottom, i / cols), j / rows);
    let d = "";
    for (let i = 0; i <= cols; i++) {
        d += seg(P(i, 0), P(i, rows));
        if (i === cols) break;
        for (let j = 0; j < rows; j++) {
            d += seg(P(i, j), P(i + 1, j)) + seg(P(i, j), P(i + 1, j + 1));
            if (cross) d += seg(P(i + 1, j), P(i, j + 1));
        }
    }
    path(parent, d, stroke, width);
}

// Bent block
function drawBent() {
    const gray = "#757575";
    const back = [[1148, 749], [1184, 733], [1219, 720], [1254, 707], [1290, 696], [1325, 688], [1358, 683], [1390, 680], [1418, 679], [1440, 681]];
    const ridge = [[1440, 681], [1467, 689], [1495, 692], [1522, 702], [1547, 706], [1566, 714], [1590, 719], [1612, 727], [1634, 731], [1656, 739], [1678, 743], [1699, 751], [1726, 756], [1755, 768], [1782, 787], [1813, 810], [1846, 843]];
    const top = [[1413, 822], [1450, 802], [1486, 788], [1522, 778], [1559, 768], [1595, 762], [1631, 758], [1668, 757], [1711, 762], [1750, 773], [1784, 790], [1813, 813], [1846, 843]];
    const low = [[1417, 878], [1469, 855], [1522, 837], [1588, 821], [1629, 814], [1680, 815], [1726, 827], [1770, 850], [1816, 893]];
    const left = [[1148, 749], [1413, 822]], left2 = [[1155, 807], [1417, 878]];

    poly(bent, [[1159, 833], [1190, 817], [1588, 815], [1680, 845], [1634, 844], [1566, 853], [1508, 868], [1459, 884], [1421, 906]], "#ffff00");
    poly(bent, [[1568, 854], [1600, 847], [1634, 844], [1677, 846], [1726, 860], [1765, 883], [1801, 918]], "#666600");
    path(bent, "M1159 833L1421 906M1568 854L1801 918M1159 833L1190 817", "#664", 1, "3 1");
    path(bent, "M1421 906Q1500 862 1566 853T1634 844T1726 860Q1765 880 1801 918", "#3a5ae8", 2);

    // underside
    const under = [[1588, 821], [1677, 843], [1685, 857], [1728, 868], [1770, 882], [1816, 893]];
    poly(bent, low.slice(3).concat(under.slice().reverse()), "#00c400", gray, 2);
    mesh(bent, low.slice(3), under, 14, 2, gray, 2, true);

    poly(bent, left.concat(left2.slice().reverse()), "#00c400", gray, 3);
    mesh(bent, left, left2, 12, 3, gray, 2, false);
    const roof = back.concat(ridge.slice(1), top.slice().reverse());
    poly(bent, roof, gray, gray, 2);

    // small green facets, kept inside the top face
    const clip = add(bent, "clipPath", { id: "roofClip" });
    poly(clip, roof, "#000");
    const near = left.concat(top.slice(1));
    const far = back.concat(ridge.slice(1));
    let fine = "";
    for (let r = 1; r < 29; r++) {
        for (let c = 2; c < 132; c++) {
            const wave = Math.sin(c * 0.42 + r * 0.9) + Math.sin(c * 0.13 - r * 0.7);
            const edge = c > 95 ? (c - 95) * 0.007 : 0;
            if (rnd() > 0.42 - edge + wave * 0.22) continue;
            const p = mix(along(near, c / 152), along(far, c / 152), (r + rnd() * 0.6) / 31);
            const depth = 1 - r / 31;
            const w = 2 + rnd() * 6 * (0.4 + depth * 0.5);
            const h = 1 + rnd() * 5 * depth;
            fine += "M" + p[0].toFixed(1) + " " + p[1].toFixed(1) + "l" + w.toFixed(1) + " " + (-h).toFixed(1) + "l-1 " + (h + 1).toFixed(1) + "z";
        }
    }
    add(bent, "path", { d: fine, fill: "#00f000", "clip-path": "url(#roofClip)" });
    path(bent, "M" + ridge.map(p => p[0] + " " + (p[1] + 2)).join("L"), gray, 5);

    poly(bent, top.concat(low.slice().reverse()), "#00e000", gray, 3);
    mesh(bent, top, low, 13, 2, gray, 3, true);

    // light area where the sheet shows through
    poly(bent, [[1655, 757], [1700, 762], [1732, 782], [1752, 812], [1735, 825], [1700, 800], [1680, 775]], "#d0d2d2");
    mesh(bent, [[1655, 758], [1700, 764], [1752, 812]], [[1632, 812], [1685, 857], [1728, 868]], 5, 4, "#dfe1e1", 2, true);
    mesh(bent, [[1640, 790], [1700, 775], [1750, 800]], [[1650, 818], [1700, 820], [1745, 850]], 4, 2, gray, 2, true);
    let bits = "";
    for (let i = 0; i < 45; i++) {
        const x = 1640 + rnd() * 100, y = 765 + rnd() * 65;
        bits += "M" + x.toFixed(1) + " " + y.toFixed(1) + "l6 3l-5 5z";
    }
    add(bent, "path", { d: bits, fill: "#00e000" });

    path(bent, "M1190 812L1255 790M1417 878L1459 884L1566 845L1660 838M1522 837L1790 900M1522 780L1600 812", "#c8c8b0", 1, "2 3");
    ring(bent, 1159, 833);
    ring(bent, 1421, 906);
    ring(bent, 1459, 884);
    ring(bent, 1566, 845);
    ring(bent, 1538, 846, "#cc9");
    ring(bent, 1801, 918);
    path(bent, "M1790 898L1809 920M1773 915L1806 925", "#a8642a", 3);
    poly(bent, [[1777, 884], [1789, 895], [1782, 897]], "#9a5a24");
    poly(bent, [[1755, 911], [1774, 912], [1770, 919]], "#9a5a24");
    label(bent, 1794, 894, "U", "#b87a4a");
}

drawFlat();
drawBent();
```
